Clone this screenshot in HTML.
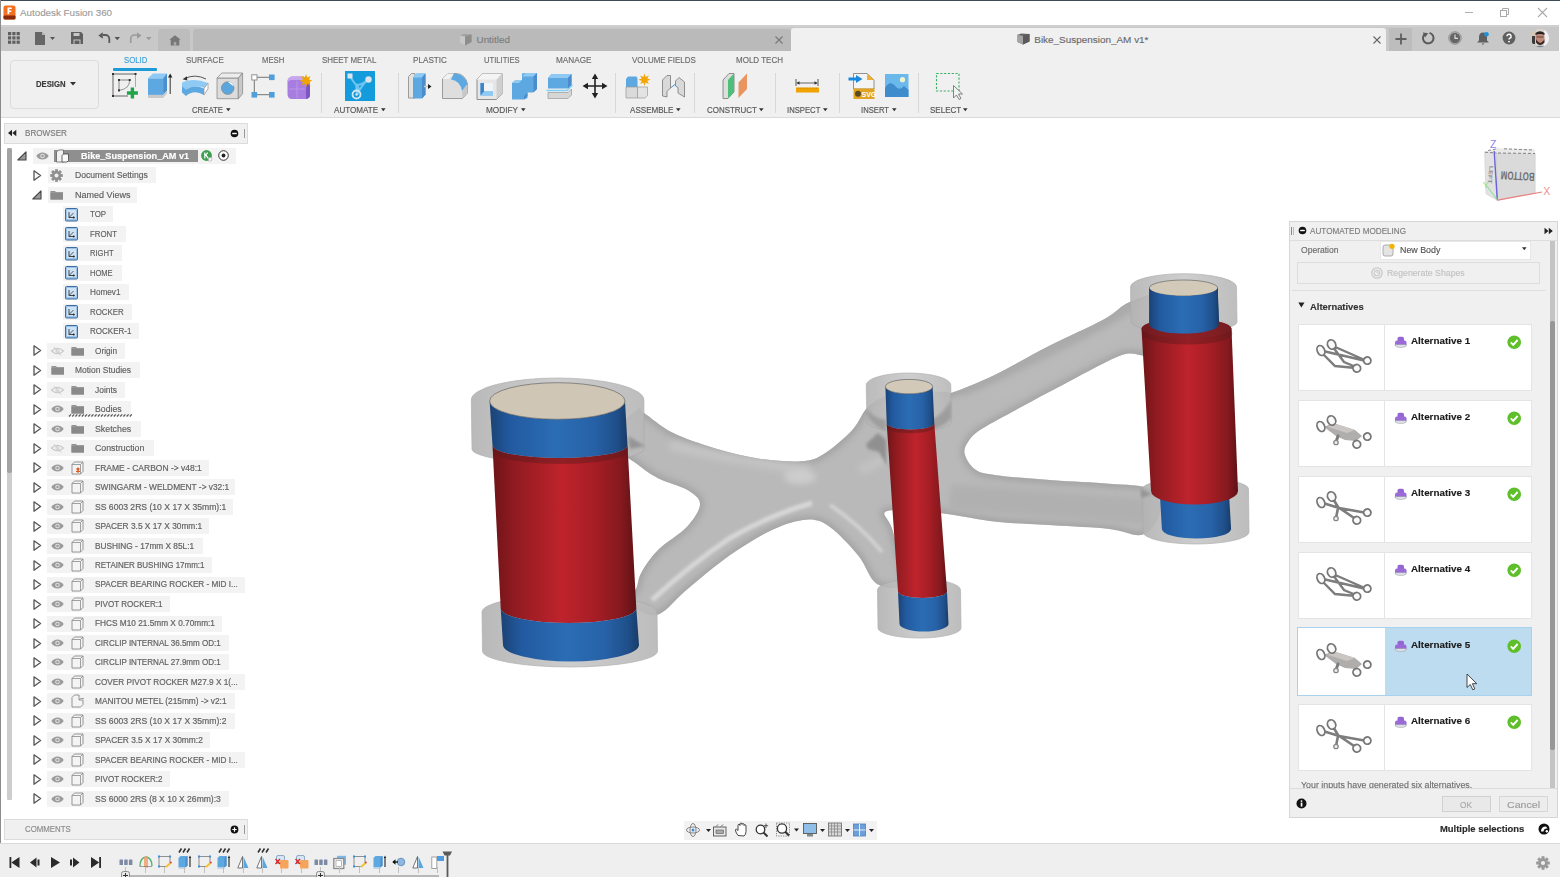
<!DOCTYPE html>
<html><head><meta charset="utf-8">
<style>
*{margin:0;padding:0;box-sizing:border-box}
html,body{width:1560px;height:877px;overflow:hidden;background:#fff;font-family:"Liberation Sans",sans-serif;position:relative}
.a{position:absolute}
.t{position:absolute;white-space:nowrap;line-height:1;-webkit-text-stroke-width:0.15px}
.up{display:inline-block;transform-origin:0 50%}
svg{position:absolute;overflow:visible}
</style></head><body>
<div class="a" style="left:0px;top:0px;width:1560px;height:1px;background:#3e4a54;"></div>
<div class="a" style="left:0px;top:1px;width:1560px;height:24px;background:#ffffff;"></div>
<div class="a" style="left:0px;top:0px;width:1px;height:843px;background:#8c8c8c;"></div>
<svg style="left:3px;top:5px" width="13" height="15" viewBox="0 0 13 15"><rect x="0.5" y="0.5" width="12" height="14" rx="2" fill="#f37021"/><rect x="0.5" y="10.5" width="12" height="4" rx="1" fill="#8a2a0a"/><path d="M4.5 2.5h4.2v1.6H6.3v1.3h2v1.5h-2v2.4H4.5z" fill="#fff"/></svg>
<div class="t" style="left:20.00px;top:8.10px;font-size:9.8px;color:#9c9c9c;font-weight:normal;">Autodesk Fusion 360</div>
<div class="a" style="left:1465px;top:12px;width:8px;height:1px;background:#b0b0b0;"></div>
<svg style="left:1499px;top:7px" width="11" height="11" viewBox="0 0 11 11"><rect x="1.5" y="3.5" width="6" height="6" fill="none" stroke="#aaa" stroke-width="1"/><path d="M3.5 3.5V1.5h6v6h-2" fill="none" stroke="#aaa" stroke-width="1"/></svg>
<svg style="left:1537px;top:7px" width="11" height="11" viewBox="0 0 11 11"><path d="M1 1L10 10M10 1L1 10" stroke="#aaa" stroke-width="1.1"/></svg>
<div class="a" style="left:1px;top:25px;width:1558px;height:26px;background:#c8c8c8;"></div>
<div class="a" style="left:1px;top:25px;width:1558px;height:2px;background:#cfcfcf;"></div>
<svg style="left:8px;top:32px" width="13" height="13" viewBox="0 0 13 13"><rect x="0.0" y="0.0" width="3.2" height="3.2" fill="#5f5f5f"/><rect x="0.0" y="4.3" width="3.2" height="3.2" fill="#5f5f5f"/><rect x="0.0" y="8.6" width="3.2" height="3.2" fill="#5f5f5f"/><rect x="4.3" y="0.0" width="3.2" height="3.2" fill="#5f5f5f"/><rect x="4.3" y="4.3" width="3.2" height="3.2" fill="#5f5f5f"/><rect x="4.3" y="8.6" width="3.2" height="3.2" fill="#5f5f5f"/><rect x="8.6" y="0.0" width="3.2" height="3.2" fill="#5f5f5f"/><rect x="8.6" y="4.3" width="3.2" height="3.2" fill="#5f5f5f"/><rect x="8.6" y="8.6" width="3.2" height="3.2" fill="#5f5f5f"/></svg>
<svg style="left:34px;top:31px" width="24" height="15" viewBox="0 0 24 15"><path d="M1 1h7l3 3v10H1z" fill="#666"/><path d="M8 1v3h3" fill="#bbb"/><path d="M16 6h5l-2.5 3z" fill="#555"/></svg>
<svg style="left:71px;top:32px" width="12" height="12" viewBox="0 0 12 12"><path d="M0 0h10l2 2v10H0z" fill="#5f5f5f"/><rect x="2.5" y="1" width="6" height="3" fill="#c8c8c8"/><rect x="2.5" y="7.5" width="7" height="4.5" fill="#c8c8c8"/><rect x="3.5" y="8.5" width="5" height="3.5" fill="#5f5f5f"/></svg>
<svg style="left:97px;top:32px" width="26" height="13" viewBox="0 0 26 13"><path d="M6 3H8.5A3.8 3.8 0 0 1 12.3 6.8V11" fill="none" stroke="#5a5a5a" stroke-width="1.8"/><path d="M1.3 3.5L5.8 0.2V6.8z" fill="#5a5a5a"/><path d="M17.5 5h5.5l-2.75 3.2z" fill="#555"/></svg>
<svg style="left:129px;top:32px" width="26" height="13" viewBox="0 0 26 13"><path d="M8 3H5.5A3.8 3.8 0 0 0 1.7 6.8V11" fill="none" stroke="#9a9a9a" stroke-width="1.6"/><path d="M12.5 3.5L8 0.2V6.8z" fill="#9a9a9a"/><path d="M17 5h5.5l-2.75 3.2z" fill="#9a9a9a"/></svg>
<div class="a" style="left:158px;top:29px;width:32px;height:22px;background:#bdbdbd;border-radius:3px 3px 0 0;"></div>
<svg style="left:169px;top:35px" width="12" height="11" viewBox="0 0 12 11"><path d="M6 0.3L11.7 4.8H10.3V10.5H1.7V4.8H0.3z" fill="#777"/><rect x="4.8" y="7" width="2.4" height="3.5" fill="#a8a8a8"/></svg>
<div class="a" style="left:193px;top:29px;width:598px;height:22px;background:#bababa;border-radius:3px 3px 0 0;"></div>
<svg style="left:459px;top:33px" width="14" height="13" viewBox="0 0 14 13"><path d="M1 2.5L5 1L12.5 1.5V9L6 12.5L1 10z" fill="#a0a0a0"/><path d="M1 2.5L6 3.5V12.5L1 10z" fill="#c8c8c8"/><path d="M6 3.5L12.5 1.5V9L6 12.5z" fill="#8e8e8e"/></svg>
<div class="t" style="left:476.50px;top:35.22px;font-size:9.9px;color:#7c7c7c;font-weight:normal;">Untitled</div>
<svg style="left:775px;top:36px" width="8" height="8" viewBox="0 0 8 8"><path d="M0.5 0.5L7.5 7.5M7.5 0.5L0.5 7.5" stroke="#777" stroke-width="1.1"/></svg>
<div class="a" style="left:791px;top:28px;width:595px;height:23px;background:#f0f0f0;border-radius:3px 3px 0 0;"></div>
<svg style="left:1017px;top:33px" width="13" height="12" viewBox="0 0 13 12"><path d="M0.5 1.8L4.5 0.5L12.5 1V8.5L6 11.5L0.5 9z" fill="#666"/><path d="M0.5 1.8L6 3V11.5L0.5 9z" fill="#a4a4a4"/><path d="M6 3L12.5 1V8.5L6 11.5z" fill="#5a5a5a"/></svg>
<div class="t" style="left:1034.30px;top:35.19px;font-size:9.93px;color:#6a6a6a;font-weight:normal;">Bike_Suspension_AM v1*</div>
<svg style="left:1373px;top:36px" width="8" height="8" viewBox="0 0 8 8"><path d="M0.5 0.5L7.5 7.5M7.5 0.5L0.5 7.5" stroke="#666" stroke-width="1.1"/></svg>
<div class="a" style="left:1389px;top:28px;width:23px;height:23px;background:#bdbdbd;"></div>
<svg style="left:1395px;top:33px" width="12" height="12" viewBox="0 0 12 12"><path d="M6 0.5V11.5M0.5 6H11.5" stroke="#5f5f5f" stroke-width="1.8"/></svg>
<svg style="left:1421px;top:31px" width="14" height="14" viewBox="0 0 14 14"><path d="M3.2 3.6A5.3 5.3 0 1 0 8.5 1.9" fill="none" stroke="#5a5a5a" stroke-width="2"/><path d="M1.8 1.5L7.2 2.2L4 6.5z" fill="#5a5a5a"/></svg>
<svg style="left:1448px;top:31px" width="14" height="14" viewBox="0 0 14 14"><circle cx="7" cy="7" r="6.2" fill="none" stroke="#777" stroke-width="0.8"/><circle cx="7" cy="7" r="5.2" fill="#666"/><path d="M7 3.5V7.3H10" fill="none" stroke="#ddd" stroke-width="1.2"/></svg>
<svg style="left:1476px;top:31px" width="14" height="15" viewBox="0 0 14 15"><path d="M7 1.5C4.5 1.5 3 3.5 3 6V9.5L1 11.5H13L11 9.5V6C11 3.5 9.5 1.5 7 1.5z" fill="#5f5f5f"/><path d="M5.5 12.5h3L7 14z" fill="#5f5f5f"/><circle cx="10.5" cy="3.3" r="2.3" fill="#1e90e0"/></svg>
<svg style="left:1502px;top:31px" width="14" height="14" viewBox="0 0 14 14"><circle cx="7" cy="7" r="6.4" fill="#5f5f5f"/><path d="M4.9 5.3A2.1 2.1 0 1 1 7.8 7.2C7.2 7.5 7 7.9 7 8.6" fill="none" stroke="#fff" stroke-width="1.5"/><circle cx="7" cy="10.6" r="0.9" fill="#fff"/></svg>
<svg style="left:1530px;top:28px" width="20" height="20" viewBox="0 0 20 20"><defs><clipPath id="av"><circle cx="10" cy="10" r="9.2"/></clipPath><filter id="avb"><feGaussianBlur stdDeviation="0.6"/></filter></defs><g clip-path="url(#av)"><g filter="url(#avb)"><rect width="20" height="20" fill="#d8d4cf"/><rect x="0" y="0" width="6" height="20" fill="#d9c8b2"/><rect x="14" y="0" width="6" height="20" fill="#eeeeee"/><rect x="2" y="8" width="3" height="8" fill="#3a3a3a"/><ellipse cx="10" cy="9.5" rx="4.6" ry="5.2" fill="#c08a7a"/><path d="M5.5 5Q10 1.5 14.5 5V7Q10 5 5.5 7z" fill="#2a2220"/><path d="M6 11Q10 18.5 14.5 11V14.5Q10 19.5 6 14.5z" fill="#3a2622"/><path d="M6.5 9H13.5" stroke="#5a4038" stroke-width="0.9"/><path d="M3 20Q10 15 17 20z" fill="#7d8a96"/></g></g></svg>
<div class="a" style="left:1px;top:51px;width:1559px;height:66px;background:#f0f0f0;"></div>
<div class="a" style="left:1px;top:117px;width:1559px;height:1px;background:#dadada;"></div>
<div class="a" style="left:10px;top:60px;width:89px;height:49px;background:#f0f0f0;border:1px solid #dcdcdc;border-radius:4px;"></div>
<div class="t" style="left:35.50px;top:79.93px;font-size:9.3px;color:#3a3a3a;font-weight:bold;transform:scale(0.83,1.0);transform-origin:0 7.87px;">DESIGN</div>
<svg style="left:70px;top:82px" width="6" height="4" viewBox="0 0 6 4"><path d="M0 0h6L3 3.5z" fill="#333"/></svg>
<div class="t" style="left:123.60px;top:55.78px;font-size:9.0px;color:#3aa0d8;font-weight:normal;transform:scale(0.863,1.000);transform-origin:0 7.62px;">SOLID</div>
<div class="t" style="left:186.30px;top:55.78px;font-size:9.0px;color:#6a6a6a;font-weight:normal;transform:scale(0.887,1.000);transform-origin:0 7.62px;">SURFACE</div>
<div class="t" style="left:262.00px;top:55.78px;font-size:9.0px;color:#6a6a6a;font-weight:normal;transform:scale(0.861,1.000);transform-origin:0 7.62px;">MESH</div>
<div class="t" style="left:321.50px;top:55.78px;font-size:9.0px;color:#6a6a6a;font-weight:normal;transform:scale(0.880,1.000);transform-origin:0 7.62px;">SHEET METAL</div>
<div class="t" style="left:413.00px;top:55.78px;font-size:9.0px;color:#6a6a6a;font-weight:normal;transform:scale(0.906,1.000);transform-origin:0 7.62px;">PLASTIC</div>
<div class="t" style="left:484.40px;top:55.78px;font-size:9.0px;color:#6a6a6a;font-weight:normal;transform:scale(0.847,1.000);transform-origin:0 7.62px;">UTILITIES</div>
<div class="t" style="left:556.00px;top:55.78px;font-size:9.0px;color:#6a6a6a;font-weight:normal;transform:scale(0.910,1.000);transform-origin:0 7.62px;">MANAGE</div>
<div class="t" style="left:632.00px;top:55.78px;font-size:9.0px;color:#6a6a6a;font-weight:normal;transform:scale(0.885,1.000);transform-origin:0 7.62px;">VOLUME FIELDS</div>
<div class="t" style="left:735.50px;top:55.78px;font-size:9.0px;color:#6a6a6a;font-weight:normal;transform:scale(0.890,1.000);transform-origin:0 7.62px;">MOLD TECH</div>
<div class="a" style="left:113px;top:68px;width:44px;height:3px;background:#1e9bd7;border-radius:1px;"></div>
<div class="t" style="left:192.00px;top:105.52px;font-size:8.6px;color:#555;font-weight:normal;transform:scale(0.905,1.000);transform-origin:0 7.28px;">CREATE</div>
<svg style="left:226px;top:108px" width="5" height="4" viewBox="0 0 5 4"><path d="M0 0.3h4.6L2.3 3.3z" fill="#333"/></svg>
<div class="t" style="left:333.50px;top:105.52px;font-size:8.6px;color:#555;font-weight:normal;transform:scale(0.941,1.000);transform-origin:0 7.28px;">AUTOMATE</div>
<svg style="left:381px;top:108px" width="5" height="4" viewBox="0 0 5 4"><path d="M0 0.3h4.6L2.3 3.3z" fill="#333"/></svg>
<div class="t" style="left:486.00px;top:105.52px;font-size:8.6px;color:#555;font-weight:normal;transform:scale(0.957,1.000);transform-origin:0 7.28px;">MODIFY</div>
<svg style="left:521px;top:108px" width="5" height="4" viewBox="0 0 5 4"><path d="M0 0.3h4.6L2.3 3.3z" fill="#333"/></svg>
<div class="t" style="left:629.50px;top:105.52px;font-size:8.6px;color:#555;font-weight:normal;transform:scale(0.938,1.000);transform-origin:0 7.28px;">ASSEMBLE</div>
<svg style="left:676px;top:108px" width="5" height="4" viewBox="0 0 5 4"><path d="M0 0.3h4.6L2.3 3.3z" fill="#333"/></svg>
<div class="t" style="left:707.00px;top:105.52px;font-size:8.6px;color:#555;font-weight:normal;transform:scale(0.926,1.000);transform-origin:0 7.28px;">CONSTRUCT</div>
<svg style="left:759px;top:108px" width="5" height="4" viewBox="0 0 5 4"><path d="M0 0.3h4.6L2.3 3.3z" fill="#333"/></svg>
<div class="t" style="left:786.60px;top:105.52px;font-size:8.6px;color:#555;font-weight:normal;transform:scale(0.896,1.000);transform-origin:0 7.28px;">INSPECT</div>
<svg style="left:823px;top:108px" width="5" height="4" viewBox="0 0 5 4"><path d="M0 0.3h4.6L2.3 3.3z" fill="#333"/></svg>
<div class="t" style="left:861.00px;top:105.52px;font-size:8.6px;color:#555;font-weight:normal;transform:scale(0.892,1.000);transform-origin:0 7.28px;">INSERT</div>
<svg style="left:892px;top:108px" width="5" height="4" viewBox="0 0 5 4"><path d="M0 0.3h4.6L2.3 3.3z" fill="#333"/></svg>
<div class="t" style="left:929.60px;top:105.52px;font-size:8.6px;color:#555;font-weight:normal;transform:scale(0.933,1.000);transform-origin:0 7.28px;">SELECT</div>
<svg style="left:963px;top:108px" width="5" height="4" viewBox="0 0 5 4"><path d="M0 0.3h4.6L2.3 3.3z" fill="#333"/></svg>
<div class="a" style="left:321px;top:73px;width:1px;height:40px;background:#d8d8d8;"></div>
<div class="a" style="left:398px;top:73px;width:1px;height:40px;background:#d8d8d8;"></div>
<div class="a" style="left:615px;top:73px;width:1px;height:40px;background:#d8d8d8;"></div>
<div class="a" style="left:694px;top:73px;width:1px;height:40px;background:#d8d8d8;"></div>
<div class="a" style="left:775px;top:73px;width:1px;height:40px;background:#d8d8d8;"></div>
<div class="a" style="left:839px;top:73px;width:1px;height:40px;background:#d8d8d8;"></div>
<div class="a" style="left:918px;top:73px;width:1px;height:40px;background:#d8d8d8;"></div>
<svg style="left:111px;top:72px" width="29" height="28" viewBox="0 0 29 28">
<path d="M2 2H24.5M2 2V24M2 24H17M24.5 2V15" fill="none" stroke="#555" stroke-width="0.9"/>
<path d="M24.5 2V15M6 24H17" fill="none" stroke="#aaa" stroke-width="1"/>
<path d="M8 8H18.7M8 8V18.4" fill="none" stroke="#777" stroke-width="0.9"/>
<path d="M18.7 8Q18.7 17 8 18.4" fill="none" stroke="#888" stroke-width="0.9"/>
<rect x="1" y="1" width="2" height="2" fill="#333"/><rect x="23.5" y="1" width="2" height="2" fill="#333"/><rect x="1" y="23" width="2" height="2" fill="#333"/>
<rect x="7" y="7" width="2" height="2" fill="#333"/><rect x="17.7" y="7" width="2" height="2" fill="#333"/><rect x="7" y="17.4" width="2" height="2" fill="#333"/>
<path d="M21.4 15.5V26.5M15.9 21H26.9" stroke="#21a34a" stroke-width="3.4"/>
</svg>
<svg style="left:147px;top:72px" width="26" height="28" viewBox="0 0 26 28">
<path d="M1 6.3H16.1V22.9H1z" fill="#5ea8e2"/>
<path d="M1 6.3L5.9 1.4H20L16.1 6.3z" fill="#8ecaf3"/>
<path d="M16.1 6.3L20 1.4V18.5L16.1 22.9z" fill="#4a90d0"/>
<path d="M1 22.9H16.1L20 18.5V21.5L16.1 26.1H1z" fill="#c9c9c9"/>
<path d="M23.2 4V22" stroke="#333" stroke-width="1"/><path d="M21 5.5L23.2 1.5L25.4 5.5z" fill="#222"/>
</svg>
<svg style="left:181px;top:72px" width="29" height="28" viewBox="0 0 29 28">
<path d="M4 6.5Q14 1.5 25 7" fill="none" stroke="#555" stroke-width="1"/>
<path d="M1.5 7.2L6 4.2L6.2 8.6z" fill="#333"/>
<path d="M1 10.5Q13 5.5 27 11V17Q13 12 5 17.5L1 14z" fill="#8ecaf3"/>
<path d="M1 14L5 17.5Q13 12 23 16.5V23Q13 17 5 24L1 20.5z" fill="#5ea8e2"/>
<path d="M23 16.5L27 11V17L23 23z" fill="#fff" stroke="#999" stroke-width="0.8"/>
</svg>
<svg style="left:216px;top:72px" width="28" height="28" viewBox="0 0 28 28">
<path d="M1 6H22.3V26.7H1z" fill="#dcdcdc" stroke="#8a8a8a" stroke-width="0.8"/>
<path d="M1 6L5.8 1H26.6L22.3 6z" fill="#ececec" stroke="#8a8a8a" stroke-width="0.8"/>
<path d="M22.3 6L26.6 1V21.7L22.3 26.7z" fill="#c9c9c9" stroke="#8a8a8a" stroke-width="0.8"/>
<circle cx="11.7" cy="16.1" r="6.3" fill="#5aa6df" stroke="#8a8a8a" stroke-width="0.8"/>
<path d="M11.7 9.8A6.3 6.3 0 0 1 17.8 14.6Q14 11.5 11.7 9.8z" fill="#fff"/>
</svg>
<svg style="left:251px;top:74px" width="25" height="25" viewBox="0 0 25 25">
<path d="M6 3.3H18M3.3 6V19M6 20.7H18" stroke="#666" stroke-width="0.9"/>
<rect x="0.8" y="0.8" width="5.2" height="5.2" fill="#fff" stroke="#888" stroke-width="0.9"/>
<rect x="18" y="0.5" width="5.6" height="5.6" fill="#4e9fdc"/>
<rect x="0.5" y="18" width="5.6" height="5.6" fill="#4e9fdc"/>
<rect x="18" y="18" width="5.6" height="5.6" fill="#4e9fdc"/>
</svg>
<svg style="left:286px;top:73px" width="27" height="27" viewBox="0 0 27 27">
<path d="M1.5 9Q1.5 4 6 3.5H16Q20 3.5 21 6L24 10V22Q24 25.5 20 26H6Q1.5 26 1.5 21z" fill="#a77de0"/>
<path d="M1.5 9Q1.5 4 6 3.5H16Q19 3.5 20 5.5L18 7H5Q3 7.5 1.5 9z" fill="#c7a6f0"/>
<path d="M20 8.5L24 10V22Q24 25.5 20 26z" fill="#7e56c4"/>
<path d="M3 16H19M11 8V25" stroke="#c9a9f2" stroke-width="0.8" opacity="0.7"/>
<path d="M20 1L21.2 4.6L24.5 3L23 6.5L26.6 7.7L23 9L24.5 12.4L21.2 10.8L20 14.4L18.8 10.8L15.5 12.4L17 9L13.4 7.7L17 6.5L15.5 3L18.8 4.6z" fill="#f0a400"/>
</svg>
<div class="a" style="left:345px;top:71px;width:30px;height:30px;background:#149bdb;"></div>
<svg style="left:345px;top:71px" width="30" height="30" viewBox="0 0 30 30">
<path d="M5 5Q9 12 11 13.5Q16 15 23 8.5M11 13.5Q12 19 12 24M11 13.5Q16 17 12 24M23 8.5Q16 15 12 24" fill="none" stroke="#6fc4f1" stroke-width="2"/>
<rect x="2.5" y="2.5" width="5" height="5" fill="#d9e6ee"/>
<circle cx="23.5" cy="8.5" r="3.2" fill="#dde3e8"/>
<circle cx="11.5" cy="23.5" r="4" fill="none" stroke="#d5e6f0" stroke-width="1.8"/>
<circle cx="11.5" cy="23.5" r="1.2" fill="#d5e6f0"/>
</svg>
<svg style="left:407px;top:72px" width="26" height="28" viewBox="0 0 26 28">
<path d="M1.5 4.5L4.5 1.5H8V26H1.5z" fill="#e2e2e2" stroke="#888" stroke-width="0.8"/>
<path d="M6 5.5L9.5 1.5H18.5V22.5L15 26.5H6z" fill="#5ea8e2"/>
<path d="M6 5.5L9.5 1.5H18.5L15 5.5z" fill="#8ecaf3"/>
<path d="M15 5.5L18.5 1.5V22.5L15 26.5z" fill="#4a8ccc"/>
<path d="M17 14.5H21.5" stroke="#ccc" stroke-width="1.5"/><path d="M21 12L24.5 14.5L21 17z" fill="#222"/>
</svg>
<svg style="left:441px;top:72px" width="28" height="28" viewBox="0 0 28 28">
<path d="M1.5 7L7 1.5H15Q24 2 26.5 12V21L21.5 26.5H1.5z" fill="#dedede" stroke="#888" stroke-width="0.8"/>
<path d="M1.5 7L7 1.5H13L7.5 7z" fill="#f2f2f2"/>
<path d="M13 1.5Q24 2 26.5 12L21 19Q19.5 9 10 7.5z" fill="#5ea8e2"/>
<path d="M21 19L26.5 12V21L21.5 26.5z" fill="#c8c8c8"/>
</svg>
<svg style="left:476px;top:72px" width="28" height="28" viewBox="0 0 28 28">
<path d="M1 7.5L6.5 1.5H26V22L20.5 27.5H1z" fill="#e6e6e6" stroke="#777" stroke-width="0.8"/>
<path d="M20.5 7.5L26 1.5V22L20.5 27.5z" fill="#cfcfcf"/>
<path d="M1 7.5L6.5 1.5H26L20.5 7.5z" fill="#f4f4f4"/>
<rect x="4.5" y="11" width="12.5" height="12.5" fill="#eef4f8"/>
<path d="M4.5 11H8V19.5H17V23.5H4.5z" fill="#5ea8e2"/>
<path d="M4.5 11H8V19.5L4.5 23.5z" fill="#3d86c6"/>
<path d="M8 19.5H17V23.5H4.5z" fill="#8ecaf3"/>
</svg>
<svg style="left:511px;top:72px" width="28" height="28" viewBox="0 0 28 28">
<path d="M1 11L4.5 8H11V1.5L14.5 1H26V17L22 20.5H16.5V26L13 27.5H1z" fill="#5ea8e2"/>
<path d="M11 4.5L14.5 1H26L22.5 4.5z" fill="#8ecaf3"/>
<path d="M22.5 4.5L26 1V17L22.5 20.5z" fill="#4a8ccc"/>
<path d="M1 11L4.5 8H11L8 11z" fill="#8ecaf3"/>
<path d="M13 24L16.5 20.5V24L13 27.5z" fill="#4a8ccc"/>
</svg>
<svg style="left:546px;top:72px" width="28" height="28" viewBox="0 0 28 28">
<path d="M2 6L5.5 2H25.5V13L22 16.5H2z" fill="#5ea8e2"/>
<path d="M2 6L5.5 2H25.5L22 6z" fill="#8ecaf3"/>
<path d="M22 6L25.5 2V13L22 16.5z" fill="#4a8ccc"/>
<path d="M0.5 18.5H21L26.5 13" fill="none" stroke="#7fd0f5" stroke-width="1.4"/>
<path d="M2 20.5H22L25.5 17V23L22 26.5H2z" fill="#d6d6d6" stroke="#999" stroke-width="0.7"/>
</svg>
<svg style="left:582px;top:73px" width="26" height="26" viewBox="0 0 26 26">
<path d="M13 2V24M2 13H24" stroke="#222" stroke-width="1.6"/>
<path d="M13 0.5L16.2 6H9.8z M13 25.5L16.2 20H9.8z M0.5 13L6 9.8V16.2z M25.5 13L20 9.8V16.2z" fill="#222"/>
</svg>
<svg style="left:625px;top:73px" width="27" height="27" viewBox="0 0 27 27">
<path d="M1 6L3 3.5H11.5L12.5 5.5V14H1z" fill="#5ea8e2"/>
<path d="M1 14H12.5V25H1z" fill="#dadada" stroke="#9a9a9a" stroke-width="0.7"/>
<path d="M12.5 14H22.5V22.5L20 25H12.5z" fill="#e3e3e3" stroke="#9a9a9a" stroke-width="0.7"/>
<path d="M19.5 0.5L20.6 3.9L23.8 2.4L22.3 5.6L25.7 6.7L22.3 7.8L23.8 11L20.6 9.5L19.5 12.9L18.4 9.5L15.2 11L16.7 7.8L13.3 6.7L16.7 5.6L15.2 2.4L18.4 3.9z" fill="#f2a500"/>
</svg>
<svg style="left:661px;top:74px" width="26" height="25" viewBox="0 0 26 25">
<path d="M1.5 6L6 1.5H9.5V14L6 17.5V23L1.5 22z" fill="#d9d9d9" stroke="#777" stroke-width="0.8"/>
<path d="M14.5 7L18 3.5L23.5 8V23L17 19V13.5L14.5 12z" fill="#d9d9d9" stroke="#777" stroke-width="0.8"/>
<path d="M9.5 14L14.5 10" stroke="#3e95d8" stroke-width="1"/>
</svg>
<svg style="left:722px;top:72px" width="27" height="28" viewBox="0 0 27 28">
<path d="M1 8L7 1.5H12V20L6 26.5H1z" fill="#dedede" stroke="#777" stroke-width="0.8"/>
<path d="M6 8L12 1.5V20L6 26.5z" fill="#4dbf78"/>
<path d="M16.5 10.5L25 1.5V17L16.5 26z" fill="#e89560"/>
</svg>
<svg style="left:795px;top:78px" width="25" height="16" viewBox="0 0 25 16">
<path d="M1 1V8M23 1V8" stroke="#444" stroke-width="0.9"/>
<path d="M2 5H22" stroke="#555" stroke-width="0.9"/>
<path d="M1.5 5L4.5 3.3V6.7z M22.5 5L19.5 3.3V6.7z" fill="#333"/>
<rect x="1" y="9.5" width="23" height="5" fill="#f0a200"/>
<path d="M3 9.5V11M6 9.5V11M9 9.5V11M12 9.5V11M15 9.5V11M18 9.5V11M21 9.5V11" stroke="#b87800" stroke-width="0.6"/>
</svg>
<svg style="left:848px;top:72px" width="28" height="28" viewBox="0 0 28 28">
<path d="M5.5 1.5H19L26 8V17H5.5z" fill="#f4f4f4" stroke="#777" stroke-width="0.8"/>
<path d="M19 1.5L26 8H19z" fill="#f0b030"/>
<rect x="5.5" y="16.5" width="21" height="10.5" fill="#e2a420"/>
<circle cx="10" cy="21.7" r="3" fill="#5a4a20"/>
<text x="13.5" y="25.3" font-family="Liberation Sans" font-weight="bold" font-size="7" fill="#fff">SVG</text>
<path d="M0.5 7H8.5" stroke="#1888e0" stroke-width="3"/><path d="M8 3L14.5 7L8 11z" fill="#1888e0"/>
</svg>
<svg style="left:884px;top:73px" width="26" height="25" viewBox="0 0 26 25">
<rect x="1" y="1" width="23.5" height="23" fill="#6ab8ec"/>
<path d="M1 24V15Q6 6 12 14Q16 18 20 13L24.5 17V24z" fill="#3f8ccc"/>
<circle cx="18.5" cy="6.7" r="2.6" fill="#f0f3d0"/>
</svg>
<svg style="left:935px;top:72px" width="29" height="28" viewBox="0 0 29 28">
<rect x="1.5" y="1.5" width="22.5" height="17.5" fill="none" stroke="#3bb066" stroke-width="1.1" stroke-dasharray="2.2 1.6"/>
<path d="M18.5 13.5V26L21.5 23L24 27.5L26 26.5L23.5 22H27.5z" fill="#f2f2f2" stroke="#777" stroke-width="0.9"/>
</svg>
<div class="a" style="left:4px;top:123px;width:244px;height:21px;background:#f0f0f0;border:1px solid #dcdcdc;"></div>
<svg style="left:8px;top:129px" width="9" height="8" viewBox="0 0 9 8"><path d="M0 4L4 0.8V7.2z M4.3 4L8.3 0.8V7.2z" fill="#222"/></svg>
<div class="t" style="left:24.50px;top:128.88px;font-size:9.0px;color:#7a7a7a;font-weight:normal;transform:scale(0.901,1.000);transform-origin:0 7.62px;">BROWSER</div>
<svg style="left:230px;top:129px" width="9" height="9" viewBox="0 0 9 9"><circle cx="4.5" cy="4.5" r="3.8" fill="#111"/><rect x="2.2" y="3.8" width="4.6" height="1.4" fill="#fff"/></svg>
<div class="a" style="left:244px;top:129px;width:1px;height:9px;background:#999;"></div>
<div class="a" style="left:7px;top:148px;width:5px;height:652px;background:#cdcdcd;border-radius:1px;"></div>
<div class="a" style="left:7px;top:148px;width:5px;height:325px;background:#a3a3a3;border-radius:2px;"></div>
<div class="a" style="left:33px;top:148px;width:203px;height:16px;background:#f3f3f3;"></div>
<svg style="left:17px;top:151px" width="10" height="10" viewBox="0 0 10 10"><path d="M9 0.8V9H0.8z" fill="#9a9a9a" stroke="#444" stroke-width="1.1" stroke-linejoin="round"/></svg>
<svg style="left:36px;top:152px" width="13" height="9" viewBox="0 0 13 9"><path d="M0.3 4C3 -0.7 10 -0.7 12.7 4C10 8.7 3 8.7 0.3 4z" fill="#9b9b9b"/><circle cx="6.5" cy="4" r="2.3" fill="#dedede"/><circle cx="6.5" cy="4" r="1.2" fill="#9b9b9b"/></svg>
<div class="a" style="left:54px;top:150px;width:144px;height:12px;background:#8f8f8f;"></div>
<svg style="left:55px;top:149px" width="15" height="14" viewBox="0 0 15 14"><path d="M1.5 3L3.5 1H8.5V13H1.5z" fill="#f2f2f2" stroke="#555" stroke-width="0.7"/><path d="M7 6.5L8.5 5H13.5V11.5L12 13H7z" fill="#fafafa" stroke="#444" stroke-width="0.8"/></svg>
<div class="t" style="left:80.80px;top:151.51px;font-size:9.2px;color:#ffffff;font-weight:bold;transform:scale(0.994,1.000);transform-origin:0 7.79px;">Bike_Suspension_AM v1</div>
<svg style="left:201px;top:150px" width="12" height="12" viewBox="0 0 12 12"><circle cx="5.5" cy="5.5" r="5.4" fill="#3f9e4f"/><path d="M3.8 2.6V8.4M3.8 5.8L6.8 2.6M4.8 4.8L7.2 8.4" stroke="#fff" stroke-width="1.2"/><rect x="7.3" y="7.5" width="3.5" height="3.5" rx="1" fill="#f4f4f4" stroke="#888" stroke-width="0.4"/></svg>
<svg style="left:218px;top:150px" width="12" height="12" viewBox="0 0 12 12"><circle cx="5.5" cy="5.5" r="4.8" fill="#fff" stroke="#333" stroke-width="1"/><circle cx="5.5" cy="5.5" r="1.9" fill="#222"/></svg>
<div class="a" style="left:48px;top:167px;width:108px;height:16px;background:#f3f3f3;"></div>
<svg style="left:33px;top:170px" width="9" height="11" viewBox="0 0 9 11"><path d="M1 0.8L7.6 5.5L1 10.2z" fill="#fafafa" stroke="#555" stroke-width="1.3" stroke-linejoin="round"/></svg>
<svg style="left:50px;top:169px" width="13" height="13" viewBox="0 0 13 13"><g transform="translate(6.5,6.5)"><rect x="-1.4" y="-6.3" width="2.8" height="3" fill="#8f8f8f" transform="rotate(0)"/><rect x="-1.4" y="-6.3" width="2.8" height="3" fill="#8f8f8f" transform="rotate(45)"/><rect x="-1.4" y="-6.3" width="2.8" height="3" fill="#8f8f8f" transform="rotate(90)"/><rect x="-1.4" y="-6.3" width="2.8" height="3" fill="#8f8f8f" transform="rotate(135)"/><rect x="-1.4" y="-6.3" width="2.8" height="3" fill="#8f8f8f" transform="rotate(180)"/><rect x="-1.4" y="-6.3" width="2.8" height="3" fill="#8f8f8f" transform="rotate(225)"/><rect x="-1.4" y="-6.3" width="2.8" height="3" fill="#8f8f8f" transform="rotate(270)"/><rect x="-1.4" y="-6.3" width="2.8" height="3" fill="#8f8f8f" transform="rotate(315)"/><circle r="4.5" fill="#8f8f8f"/><circle r="2" fill="#f0f0f0"/></g></svg>
<div class="t" style="left:74.60px;top:171.38px;font-size:8.5px;color:#5e5e5e;font-weight:normal;transform:scale(1.014,1.000);transform-origin:0 7.20px;">Document Settings</div>
<div class="a" style="left:48px;top:187px;width:89px;height:16px;background:#f3f3f3;"></div>
<svg style="left:32px;top:190px" width="10" height="10" viewBox="0 0 10 10"><path d="M9 0.8V9H0.8z" fill="#9a9a9a" stroke="#444" stroke-width="1.1" stroke-linejoin="round"/></svg>
<svg style="left:50px;top:190px" width="14" height="11" viewBox="0 0 14 11"><path d="M0.5 1H5L6 2.2H13V9.5H0.5z" fill="#8e8e8e"/><rect x="0.5" y="2.6" width="12.5" height="6.9" fill="#8a8a8a"/><path d="M0.5 2.2H5.5" stroke="#b0b0b0" stroke-width="0.6"/></svg>
<div class="t" style="left:74.60px;top:190.86px;font-size:8.5px;color:#5e5e5e;font-weight:normal;transform:scale(1.060,1.000);transform-origin:0 7.20px;">Named Views</div>
<div class="a" style="left:63px;top:206px;width:50px;height:16px;background:#f3f3f3;"></div>
<svg style="left:65px;top:208px" width="14" height="14" viewBox="0 0 14 14"><rect x="0.5" y="0.5" width="12" height="12.5" rx="1" fill="#9cc4e8" stroke="#2f5f95" stroke-width="0.9"/><rect x="2" y="2" width="9" height="9" fill="#cfe3f5"/><path d="M4 4V9.5H9.5" fill="none" stroke="#333" stroke-width="0.9"/><path d="M4 9.5L8.5 5" stroke="#333" stroke-width="0.8"/><circle cx="8.7" cy="9.5" r="0.9" fill="#222"/></svg>
<div class="t" style="left:89.70px;top:210.34px;font-size:8.5px;color:#5e5e5e;font-weight:normal;transform:scale(0.930,1.000);transform-origin:0 7.20px;">TOP</div>
<div class="a" style="left:63px;top:226px;width:63px;height:16px;background:#f3f3f3;"></div>
<svg style="left:65px;top:227px" width="14" height="14" viewBox="0 0 14 14"><rect x="0.5" y="0.5" width="12" height="12.5" rx="1" fill="#9cc4e8" stroke="#2f5f95" stroke-width="0.9"/><rect x="2" y="2" width="9" height="9" fill="#cfe3f5"/><path d="M4 4V9.5H9.5" fill="none" stroke="#333" stroke-width="0.9"/><path d="M4 9.5L8.5 5" stroke="#333" stroke-width="0.8"/><circle cx="8.7" cy="9.5" r="0.9" fill="#222"/></svg>
<div class="t" style="left:89.70px;top:229.82px;font-size:8.5px;color:#5e5e5e;font-weight:normal;transform:scale(0.922,1.000);transform-origin:0 7.20px;">FRONT</div>
<div class="a" style="left:63px;top:245px;width:59px;height:16px;background:#f3f3f3;"></div>
<svg style="left:65px;top:247px" width="14" height="14" viewBox="0 0 14 14"><rect x="0.5" y="0.5" width="12" height="12.5" rx="1" fill="#9cc4e8" stroke="#2f5f95" stroke-width="0.9"/><rect x="2" y="2" width="9" height="9" fill="#cfe3f5"/><path d="M4 4V9.5H9.5" fill="none" stroke="#333" stroke-width="0.9"/><path d="M4 9.5L8.5 5" stroke="#333" stroke-width="0.8"/><circle cx="8.7" cy="9.5" r="0.9" fill="#222"/></svg>
<div class="t" style="left:89.70px;top:249.30px;font-size:8.5px;color:#5e5e5e;font-weight:normal;transform:scale(0.896,1.000);transform-origin:0 7.20px;">RIGHT</div>
<div class="a" style="left:63px;top:265px;width:59px;height:16px;background:#f3f3f3;"></div>
<svg style="left:65px;top:266px" width="14" height="14" viewBox="0 0 14 14"><rect x="0.5" y="0.5" width="12" height="12.5" rx="1" fill="#9cc4e8" stroke="#2f5f95" stroke-width="0.9"/><rect x="2" y="2" width="9" height="9" fill="#cfe3f5"/><path d="M4 4V9.5H9.5" fill="none" stroke="#333" stroke-width="0.9"/><path d="M4 9.5L8.5 5" stroke="#333" stroke-width="0.8"/><circle cx="8.7" cy="9.5" r="0.9" fill="#222"/></svg>
<div class="t" style="left:89.70px;top:268.78px;font-size:8.5px;color:#5e5e5e;font-weight:normal;transform:scale(0.886,1.000);transform-origin:0 7.20px;">HOME</div>
<div class="a" style="left:63px;top:284px;width:66px;height:16px;background:#f3f3f3;"></div>
<svg style="left:65px;top:286px" width="14" height="14" viewBox="0 0 14 14"><rect x="0.5" y="0.5" width="12" height="12.5" rx="1" fill="#9cc4e8" stroke="#2f5f95" stroke-width="0.9"/><rect x="2" y="2" width="9" height="9" fill="#cfe3f5"/><path d="M4 4V9.5H9.5" fill="none" stroke="#333" stroke-width="0.9"/><path d="M4 9.5L8.5 5" stroke="#333" stroke-width="0.8"/><circle cx="8.7" cy="9.5" r="0.9" fill="#222"/></svg>
<div class="t" style="left:89.70px;top:288.26px;font-size:8.5px;color:#5e5e5e;font-weight:normal;transform:scale(0.964,1.000);transform-origin:0 7.20px;">Homev1</div>
<div class="a" style="left:63px;top:304px;width:69px;height:16px;background:#f3f3f3;"></div>
<svg style="left:65px;top:305px" width="14" height="14" viewBox="0 0 14 14"><rect x="0.5" y="0.5" width="12" height="12.5" rx="1" fill="#9cc4e8" stroke="#2f5f95" stroke-width="0.9"/><rect x="2" y="2" width="9" height="9" fill="#cfe3f5"/><path d="M4 4V9.5H9.5" fill="none" stroke="#333" stroke-width="0.9"/><path d="M4 9.5L8.5 5" stroke="#333" stroke-width="0.8"/><circle cx="8.7" cy="9.5" r="0.9" fill="#222"/></svg>
<div class="t" style="left:89.70px;top:307.74px;font-size:8.5px;color:#5e5e5e;font-weight:normal;transform:scale(0.927,1.000);transform-origin:0 7.20px;">ROCKER</div>
<div class="a" style="left:63px;top:323px;width:76px;height:16px;background:#f3f3f3;"></div>
<svg style="left:65px;top:325px" width="14" height="14" viewBox="0 0 14 14"><rect x="0.5" y="0.5" width="12" height="12.5" rx="1" fill="#9cc4e8" stroke="#2f5f95" stroke-width="0.9"/><rect x="2" y="2" width="9" height="9" fill="#cfe3f5"/><path d="M4 4V9.5H9.5" fill="none" stroke="#333" stroke-width="0.9"/><path d="M4 9.5L8.5 5" stroke="#333" stroke-width="0.8"/><circle cx="8.7" cy="9.5" r="0.9" fill="#222"/></svg>
<div class="t" style="left:89.70px;top:327.22px;font-size:8.5px;color:#5e5e5e;font-weight:normal;transform:scale(0.945,1.000);transform-origin:0 7.20px;">ROCKER-1</div>
<div class="a" style="left:47px;top:343px;width:78px;height:16px;background:#f3f3f3;"></div>
<svg style="left:33px;top:345px" width="9" height="11" viewBox="0 0 9 11"><path d="M1 0.8L7.6 5.5L1 10.2z" fill="#fafafa" stroke="#555" stroke-width="1.3" stroke-linejoin="round"/></svg>
<svg style="left:50.5px;top:347px" width="13" height="9" viewBox="0 0 13 9"><path d="M0.5 4Q6.5 -1.5 12.5 4Q6.5 9.5 0.5 4z" fill="none" stroke="#c8c8c8" stroke-width="1.1"/><circle cx="6.5" cy="4" r="1.6" fill="none" stroke="#c8c8c8" stroke-width="0.9"/><path d="M3 0L10 8.5" stroke="#c8c8c8" stroke-width="0.9"/></svg>
<svg style="left:71px;top:346px" width="14" height="11" viewBox="0 0 14 11"><path d="M0.5 1H5L6 2.2H13V9.5H0.5z" fill="#8e8e8e"/><rect x="0.5" y="2.6" width="12.5" height="6.9" fill="#8a8a8a"/><path d="M0.5 2.2H5.5" stroke="#b0b0b0" stroke-width="0.6"/></svg>
<div class="t" style="left:95.20px;top:346.70px;font-size:8.5px;color:#5e5e5e;font-weight:normal;transform:scale(0.970,1.000);transform-origin:0 7.20px;">Origin</div>
<div class="a" style="left:47px;top:362px;width:93px;height:16px;background:#f3f3f3;"></div>
<svg style="left:33px;top:365px" width="9" height="11" viewBox="0 0 9 11"><path d="M1 0.8L7.6 5.5L1 10.2z" fill="#fafafa" stroke="#555" stroke-width="1.3" stroke-linejoin="round"/></svg>
<svg style="left:50.5px;top:365px" width="14" height="11" viewBox="0 0 14 11"><path d="M0.5 1H5L6 2.2H13V9.5H0.5z" fill="#8e8e8e"/><rect x="0.5" y="2.6" width="12.5" height="6.9" fill="#8a8a8a"/><path d="M0.5 2.2H5.5" stroke="#b0b0b0" stroke-width="0.6"/></svg>
<div class="t" style="left:75.00px;top:366.18px;font-size:8.5px;color:#5e5e5e;font-weight:normal;transform:scale(0.996,1.000);transform-origin:0 7.20px;">Motion Studies</div>
<div class="a" style="left:47px;top:382px;width:78px;height:16px;background:#f3f3f3;"></div>
<svg style="left:33px;top:384px" width="9" height="11" viewBox="0 0 9 11"><path d="M1 0.8L7.6 5.5L1 10.2z" fill="#fafafa" stroke="#555" stroke-width="1.3" stroke-linejoin="round"/></svg>
<svg style="left:50.5px;top:386px" width="13" height="9" viewBox="0 0 13 9"><path d="M0.5 4Q6.5 -1.5 12.5 4Q6.5 9.5 0.5 4z" fill="none" stroke="#c8c8c8" stroke-width="1.1"/><circle cx="6.5" cy="4" r="1.6" fill="none" stroke="#c8c8c8" stroke-width="0.9"/><path d="M3 0L10 8.5" stroke="#c8c8c8" stroke-width="0.9"/></svg>
<svg style="left:71px;top:385px" width="14" height="11" viewBox="0 0 14 11"><path d="M0.5 1H5L6 2.2H13V9.5H0.5z" fill="#8e8e8e"/><rect x="0.5" y="2.6" width="12.5" height="6.9" fill="#8a8a8a"/><path d="M0.5 2.2H5.5" stroke="#b0b0b0" stroke-width="0.6"/></svg>
<div class="t" style="left:95.20px;top:385.66px;font-size:8.5px;color:#5e5e5e;font-weight:normal;transform:scale(0.991,1.000);transform-origin:0 7.20px;">Joints</div>
<div class="a" style="left:47px;top:401px;width:84px;height:16px;background:#f3f3f3;"></div>
<svg style="left:33px;top:404px" width="9" height="11" viewBox="0 0 9 11"><path d="M1 0.8L7.6 5.5L1 10.2z" fill="#fafafa" stroke="#555" stroke-width="1.3" stroke-linejoin="round"/></svg>
<svg style="left:50.5px;top:405px" width="13" height="9" viewBox="0 0 13 9"><path d="M0.3 4C3 -0.7 10 -0.7 12.7 4C10 8.7 3 8.7 0.3 4z" fill="#9b9b9b"/><circle cx="6.5" cy="4" r="2.3" fill="#dedede"/><circle cx="6.5" cy="4" r="1.2" fill="#9b9b9b"/></svg>
<svg style="left:71px;top:404px" width="62" height="13" viewBox="0 0 62 13"><path d="M0.5 1H5L6 2.2H13V9.5H0.5z" fill="#8e8e8e"/><rect x="0.5" y="2.6" width="12.5" height="6.9" fill="#8a8a8a"/><path d="M0.5 2.2H5.5" stroke="#b0b0b0" stroke-width="0.6"/><path d="M-2.0 12.5l2 -2.2M1.2 12.5l2 -2.2M4.4 12.5l2 -2.2M7.6 12.5l2 -2.2M10.8 12.5l2 -2.2M14.0 12.5l2 -2.2M17.2 12.5l2 -2.2M20.4 12.5l2 -2.2M23.6 12.5l2 -2.2M26.8 12.5l2 -2.2M30.0 12.5l2 -2.2M33.2 12.5l2 -2.2M36.4 12.5l2 -2.2M39.6 12.5l2 -2.2M42.8 12.5l2 -2.2M46.0 12.5l2 -2.2M49.2 12.5l2 -2.2M52.4 12.5l2 -2.2M55.6 12.5l2 -2.2M58.8 12.5l2 -2.2" fill="none" stroke="#5a5a5a" stroke-width="1.2"/></svg>
<div class="t" style="left:95.20px;top:405.14px;font-size:8.5px;color:#5e5e5e;font-weight:normal;transform:scale(1.024,1.000);transform-origin:0 7.20px;">Bodies</div>
<div class="a" style="left:47px;top:421px;width:94px;height:16px;background:#f3f3f3;"></div>
<svg style="left:33px;top:423px" width="9" height="11" viewBox="0 0 9 11"><path d="M1 0.8L7.6 5.5L1 10.2z" fill="#fafafa" stroke="#555" stroke-width="1.3" stroke-linejoin="round"/></svg>
<svg style="left:50.5px;top:425px" width="13" height="9" viewBox="0 0 13 9"><path d="M0.3 4C3 -0.7 10 -0.7 12.7 4C10 8.7 3 8.7 0.3 4z" fill="#9b9b9b"/><circle cx="6.5" cy="4" r="2.3" fill="#dedede"/><circle cx="6.5" cy="4" r="1.2" fill="#9b9b9b"/></svg>
<svg style="left:71px;top:424px" width="14" height="11" viewBox="0 0 14 11"><path d="M0.5 1H5L6 2.2H13V9.5H0.5z" fill="#8e8e8e"/><rect x="0.5" y="2.6" width="12.5" height="6.9" fill="#8a8a8a"/><path d="M0.5 2.2H5.5" stroke="#b0b0b0" stroke-width="0.6"/></svg>
<div class="t" style="left:95.20px;top:424.62px;font-size:8.5px;color:#5e5e5e;font-weight:normal;transform:scale(1.035,1.000);transform-origin:0 7.20px;">Sketches</div>
<div class="a" style="left:47px;top:440px;width:107px;height:16px;background:#f3f3f3;"></div>
<svg style="left:33px;top:443px" width="9" height="11" viewBox="0 0 9 11"><path d="M1 0.8L7.6 5.5L1 10.2z" fill="#fafafa" stroke="#555" stroke-width="1.3" stroke-linejoin="round"/></svg>
<svg style="left:50.5px;top:444px" width="13" height="9" viewBox="0 0 13 9"><path d="M0.5 4Q6.5 -1.5 12.5 4Q6.5 9.5 0.5 4z" fill="none" stroke="#c8c8c8" stroke-width="1.1"/><circle cx="6.5" cy="4" r="1.6" fill="none" stroke="#c8c8c8" stroke-width="0.9"/><path d="M3 0L10 8.5" stroke="#c8c8c8" stroke-width="0.9"/></svg>
<svg style="left:71px;top:443px" width="14" height="11" viewBox="0 0 14 11"><path d="M0.5 1H5L6 2.2H13V9.5H0.5z" fill="#8e8e8e"/><rect x="0.5" y="2.6" width="12.5" height="6.9" fill="#8a8a8a"/><path d="M0.5 2.2H5.5" stroke="#b0b0b0" stroke-width="0.6"/></svg>
<div class="t" style="left:95.20px;top:444.10px;font-size:8.5px;color:#5e5e5e;font-weight:normal;transform:scale(1.033,1.000);transform-origin:0 7.20px;">Construction</div>
<div class="a" style="left:47px;top:460px;width:162px;height:16px;background:#f3f3f3;"></div>
<svg style="left:33px;top:462px" width="9" height="11" viewBox="0 0 9 11"><path d="M1 0.8L7.6 5.5L1 10.2z" fill="#fafafa" stroke="#555" stroke-width="1.3" stroke-linejoin="round"/></svg>
<svg style="left:50.5px;top:464px" width="13" height="9" viewBox="0 0 13 9"><path d="M0.3 4C3 -0.7 10 -0.7 12.7 4C10 8.7 3 8.7 0.3 4z" fill="#9b9b9b"/><circle cx="6.5" cy="4" r="2.3" fill="#dedede"/><circle cx="6.5" cy="4" r="1.2" fill="#9b9b9b"/></svg>
<svg style="left:71px;top:461px" width="14" height="14" viewBox="0 0 14 14"><path d="M1 3.5L3.5 1H12V10.5L9.5 13H1z" fill="#f4f4f4" stroke="#8a8a8a" stroke-width="0.9" stroke-linejoin="round"/><path d="M1 3.5H9.5V13M9.5 3.5L12 1" fill="none" stroke="#8a8a8a" stroke-width="0.8"/><circle cx="7" cy="8" r="1.6" fill="#e05a20"/><path d="M5 10.5L9 10.5M7 8V12" stroke="#e05a20" stroke-width="1.1"/></svg>
<div class="t" style="left:95.20px;top:463.58px;font-size:8.5px;color:#5e5e5e;font-weight:normal;transform:scale(0.998,1.000);transform-origin:0 7.20px;-webkit-text-stroke:0.2px #6a6a6a;">FRAME - CARBON -&gt; v48:1</div>
<div class="a" style="left:47px;top:479px;width:188px;height:16px;background:#f3f3f3;"></div>
<svg style="left:33px;top:482px" width="9" height="11" viewBox="0 0 9 11"><path d="M1 0.8L7.6 5.5L1 10.2z" fill="#fafafa" stroke="#555" stroke-width="1.3" stroke-linejoin="round"/></svg>
<svg style="left:50.5px;top:483px" width="13" height="9" viewBox="0 0 13 9"><path d="M0.3 4C3 -0.7 10 -0.7 12.7 4C10 8.7 3 8.7 0.3 4z" fill="#9b9b9b"/><circle cx="6.5" cy="4" r="2.3" fill="#dedede"/><circle cx="6.5" cy="4" r="1.2" fill="#9b9b9b"/></svg>
<svg style="left:71px;top:480px" width="14" height="14" viewBox="0 0 14 14"><path d="M1 3.5L3.5 1H12V10.5L9.5 13H1z" fill="#f4f4f4" stroke="#8a8a8a" stroke-width="0.9" stroke-linejoin="round"/><path d="M1 3.5H9.5V13M9.5 3.5L12 1" fill="none" stroke="#8a8a8a" stroke-width="0.8"/></svg>
<div class="t" style="left:95.20px;top:483.06px;font-size:8.5px;color:#5e5e5e;font-weight:normal;transform:scale(0.979,1.000);transform-origin:0 7.20px;-webkit-text-stroke:0.2px #6a6a6a;">SWINGARM - WELDMENT -&gt; v32:1</div>
<div class="a" style="left:47px;top:499px;width:186px;height:16px;background:#f3f3f3;"></div>
<svg style="left:33px;top:501px" width="9" height="11" viewBox="0 0 9 11"><path d="M1 0.8L7.6 5.5L1 10.2z" fill="#fafafa" stroke="#555" stroke-width="1.3" stroke-linejoin="round"/></svg>
<svg style="left:50.5px;top:503px" width="13" height="9" viewBox="0 0 13 9"><path d="M0.3 4C3 -0.7 10 -0.7 12.7 4C10 8.7 3 8.7 0.3 4z" fill="#9b9b9b"/><circle cx="6.5" cy="4" r="2.3" fill="#dedede"/><circle cx="6.5" cy="4" r="1.2" fill="#9b9b9b"/></svg>
<svg style="left:71px;top:500px" width="14" height="14" viewBox="0 0 14 14"><path d="M1 3.5L3.5 1H12V10.5L9.5 13H1z" fill="#f4f4f4" stroke="#8a8a8a" stroke-width="0.9" stroke-linejoin="round"/><path d="M1 3.5H9.5V13M9.5 3.5L12 1" fill="none" stroke="#8a8a8a" stroke-width="0.8"/></svg>
<div class="t" style="left:95.20px;top:502.54px;font-size:8.5px;color:#5e5e5e;font-weight:normal;transform:scale(1.011,1.000);transform-origin:0 7.20px;-webkit-text-stroke:0.2px #6a6a6a;">SS 6003 2RS (10 X 17 X 35mm):1</div>
<div class="a" style="left:47px;top:518px;width:162px;height:16px;background:#f3f3f3;"></div>
<svg style="left:33px;top:521px" width="9" height="11" viewBox="0 0 9 11"><path d="M1 0.8L7.6 5.5L1 10.2z" fill="#fafafa" stroke="#555" stroke-width="1.3" stroke-linejoin="round"/></svg>
<svg style="left:50.5px;top:522px" width="13" height="9" viewBox="0 0 13 9"><path d="M0.3 4C3 -0.7 10 -0.7 12.7 4C10 8.7 3 8.7 0.3 4z" fill="#9b9b9b"/><circle cx="6.5" cy="4" r="2.3" fill="#dedede"/><circle cx="6.5" cy="4" r="1.2" fill="#9b9b9b"/></svg>
<svg style="left:71px;top:519px" width="14" height="14" viewBox="0 0 14 14"><path d="M1 3.5L3.5 1H12V10.5L9.5 13H1z" fill="#f4f4f4" stroke="#8a8a8a" stroke-width="0.9" stroke-linejoin="round"/><path d="M1 3.5H9.5V13M9.5 3.5L12 1" fill="none" stroke="#8a8a8a" stroke-width="0.8"/></svg>
<div class="t" style="left:95.20px;top:522.02px;font-size:8.5px;color:#5e5e5e;font-weight:normal;transform:scale(0.980,1.000);transform-origin:0 7.20px;-webkit-text-stroke:0.2px #6a6a6a;">SPACER 3.5 X 17 X 30mm:1</div>
<div class="a" style="left:47px;top:538px;width:156px;height:16px;background:#f3f3f3;"></div>
<svg style="left:33px;top:540px" width="9" height="11" viewBox="0 0 9 11"><path d="M1 0.8L7.6 5.5L1 10.2z" fill="#fafafa" stroke="#555" stroke-width="1.3" stroke-linejoin="round"/></svg>
<svg style="left:50.5px;top:542px" width="13" height="9" viewBox="0 0 13 9"><path d="M0.3 4C3 -0.7 10 -0.7 12.7 4C10 8.7 3 8.7 0.3 4z" fill="#9b9b9b"/><circle cx="6.5" cy="4" r="2.3" fill="#dedede"/><circle cx="6.5" cy="4" r="1.2" fill="#9b9b9b"/></svg>
<svg style="left:71px;top:539px" width="14" height="14" viewBox="0 0 14 14"><path d="M1 3.5L3.5 1H12V10.5L9.5 13H1z" fill="#f4f4f4" stroke="#8a8a8a" stroke-width="0.9" stroke-linejoin="round"/><path d="M1 3.5H9.5V13M9.5 3.5L12 1" fill="none" stroke="#8a8a8a" stroke-width="0.8"/></svg>
<div class="t" style="left:95.20px;top:541.50px;font-size:8.5px;color:#5e5e5e;font-weight:normal;transform:scale(0.976,1.000);transform-origin:0 7.20px;-webkit-text-stroke:0.2px #6a6a6a;">BUSHING - 17mm X 85L:1</div>
<div class="a" style="left:47px;top:557px;width:165px;height:16px;background:#f3f3f3;"></div>
<svg style="left:33px;top:560px" width="9" height="11" viewBox="0 0 9 11"><path d="M1 0.8L7.6 5.5L1 10.2z" fill="#fafafa" stroke="#555" stroke-width="1.3" stroke-linejoin="round"/></svg>
<svg style="left:50.5px;top:561px" width="13" height="9" viewBox="0 0 13 9"><path d="M0.3 4C3 -0.7 10 -0.7 12.7 4C10 8.7 3 8.7 0.3 4z" fill="#9b9b9b"/><circle cx="6.5" cy="4" r="2.3" fill="#dedede"/><circle cx="6.5" cy="4" r="1.2" fill="#9b9b9b"/></svg>
<svg style="left:71px;top:558px" width="14" height="14" viewBox="0 0 14 14"><path d="M1 3.5L3.5 1H12V10.5L9.5 13H1z" fill="#f4f4f4" stroke="#8a8a8a" stroke-width="0.9" stroke-linejoin="round"/><path d="M1 3.5H9.5V13M9.5 3.5L12 1" fill="none" stroke="#8a8a8a" stroke-width="0.8"/></svg>
<div class="t" style="left:95.20px;top:560.98px;font-size:8.5px;color:#5e5e5e;font-weight:normal;transform:scale(0.940,1.000);transform-origin:0 7.20px;-webkit-text-stroke:0.2px #6a6a6a;">RETAINER BUSHING 17mm:1</div>
<div class="a" style="left:47px;top:577px;width:198px;height:16px;background:#f3f3f3;"></div>
<svg style="left:33px;top:579px" width="9" height="11" viewBox="0 0 9 11"><path d="M1 0.8L7.6 5.5L1 10.2z" fill="#fafafa" stroke="#555" stroke-width="1.3" stroke-linejoin="round"/></svg>
<svg style="left:50.5px;top:581px" width="13" height="9" viewBox="0 0 13 9"><path d="M0.3 4C3 -0.7 10 -0.7 12.7 4C10 8.7 3 8.7 0.3 4z" fill="#9b9b9b"/><circle cx="6.5" cy="4" r="2.3" fill="#dedede"/><circle cx="6.5" cy="4" r="1.2" fill="#9b9b9b"/></svg>
<svg style="left:71px;top:578px" width="14" height="14" viewBox="0 0 14 14"><path d="M1 3.5L3.5 1H12V10.5L9.5 13H1z" fill="#f4f4f4" stroke="#8a8a8a" stroke-width="0.9" stroke-linejoin="round"/><path d="M1 3.5H9.5V13M9.5 3.5L12 1" fill="none" stroke="#8a8a8a" stroke-width="0.8"/></svg>
<div class="t" style="left:95.20px;top:580.46px;font-size:8.5px;color:#5e5e5e;font-weight:normal;transform:scale(0.961,1.000);transform-origin:0 7.20px;-webkit-text-stroke:0.2px #6a6a6a;">SPACER BEARING ROCKER - MID I...</div>
<div class="a" style="left:47px;top:596px;width:123px;height:16px;background:#f3f3f3;"></div>
<svg style="left:33px;top:599px" width="9" height="11" viewBox="0 0 9 11"><path d="M1 0.8L7.6 5.5L1 10.2z" fill="#fafafa" stroke="#555" stroke-width="1.3" stroke-linejoin="round"/></svg>
<svg style="left:50.5px;top:600px" width="13" height="9" viewBox="0 0 13 9"><path d="M0.3 4C3 -0.7 10 -0.7 12.7 4C10 8.7 3 8.7 0.3 4z" fill="#9b9b9b"/><circle cx="6.5" cy="4" r="2.3" fill="#dedede"/><circle cx="6.5" cy="4" r="1.2" fill="#9b9b9b"/></svg>
<svg style="left:71px;top:597px" width="14" height="14" viewBox="0 0 14 14"><path d="M1 3.5L3.5 1H12V10.5L9.5 13H1z" fill="#f4f4f4" stroke="#8a8a8a" stroke-width="0.9" stroke-linejoin="round"/><path d="M1 3.5H9.5V13M9.5 3.5L12 1" fill="none" stroke="#8a8a8a" stroke-width="0.8"/></svg>
<div class="t" style="left:95.20px;top:599.94px;font-size:8.5px;color:#5e5e5e;font-weight:normal;transform:scale(0.948,1.000);transform-origin:0 7.20px;-webkit-text-stroke:0.2px #6a6a6a;">PIVOT ROCKER:1</div>
<div class="a" style="left:47px;top:616px;width:175px;height:16px;background:#f3f3f3;"></div>
<svg style="left:33px;top:618px" width="9" height="11" viewBox="0 0 9 11"><path d="M1 0.8L7.6 5.5L1 10.2z" fill="#fafafa" stroke="#555" stroke-width="1.3" stroke-linejoin="round"/></svg>
<svg style="left:50.5px;top:620px" width="13" height="9" viewBox="0 0 13 9"><path d="M0.3 4C3 -0.7 10 -0.7 12.7 4C10 8.7 3 8.7 0.3 4z" fill="#9b9b9b"/><circle cx="6.5" cy="4" r="2.3" fill="#dedede"/><circle cx="6.5" cy="4" r="1.2" fill="#9b9b9b"/></svg>
<svg style="left:71px;top:617px" width="14" height="14" viewBox="0 0 14 14"><path d="M1 3.5L3.5 1H12V10.5L9.5 13H1z" fill="#f4f4f4" stroke="#8a8a8a" stroke-width="0.9" stroke-linejoin="round"/><path d="M1 3.5H9.5V13M9.5 3.5L12 1" fill="none" stroke="#8a8a8a" stroke-width="0.8"/></svg>
<div class="t" style="left:95.20px;top:619.42px;font-size:8.5px;color:#5e5e5e;font-weight:normal;transform:scale(0.973,1.000);transform-origin:0 7.20px;-webkit-text-stroke:0.2px #6a6a6a;">FHCS M10 21.5mm X 0.70mm:1</div>
<div class="a" style="left:47px;top:635px;width:182px;height:16px;background:#f3f3f3;"></div>
<svg style="left:33px;top:638px" width="9" height="11" viewBox="0 0 9 11"><path d="M1 0.8L7.6 5.5L1 10.2z" fill="#fafafa" stroke="#555" stroke-width="1.3" stroke-linejoin="round"/></svg>
<svg style="left:50.5px;top:639px" width="13" height="9" viewBox="0 0 13 9"><path d="M0.3 4C3 -0.7 10 -0.7 12.7 4C10 8.7 3 8.7 0.3 4z" fill="#9b9b9b"/><circle cx="6.5" cy="4" r="2.3" fill="#dedede"/><circle cx="6.5" cy="4" r="1.2" fill="#9b9b9b"/></svg>
<svg style="left:71px;top:636px" width="14" height="14" viewBox="0 0 14 14"><path d="M1 3.5L3.5 1H12V10.5L9.5 13H1z" fill="#f4f4f4" stroke="#8a8a8a" stroke-width="0.9" stroke-linejoin="round"/><path d="M1 3.5H9.5V13M9.5 3.5L12 1" fill="none" stroke="#8a8a8a" stroke-width="0.8"/></svg>
<div class="t" style="left:95.20px;top:638.90px;font-size:8.5px;color:#5e5e5e;font-weight:normal;transform:scale(0.948,1.000);transform-origin:0 7.20px;-webkit-text-stroke:0.2px #6a6a6a;">CIRCLIP INTERNAL 36.5mm OD:1</div>
<div class="a" style="left:47px;top:654px;width:182px;height:16px;background:#f3f3f3;"></div>
<svg style="left:33px;top:657px" width="9" height="11" viewBox="0 0 9 11"><path d="M1 0.8L7.6 5.5L1 10.2z" fill="#fafafa" stroke="#555" stroke-width="1.3" stroke-linejoin="round"/></svg>
<svg style="left:50.5px;top:658px" width="13" height="9" viewBox="0 0 13 9"><path d="M0.3 4C3 -0.7 10 -0.7 12.7 4C10 8.7 3 8.7 0.3 4z" fill="#9b9b9b"/><circle cx="6.5" cy="4" r="2.3" fill="#dedede"/><circle cx="6.5" cy="4" r="1.2" fill="#9b9b9b"/></svg>
<svg style="left:71px;top:655px" width="14" height="14" viewBox="0 0 14 14"><path d="M1 3.5L3.5 1H12V10.5L9.5 13H1z" fill="#f4f4f4" stroke="#8a8a8a" stroke-width="0.9" stroke-linejoin="round"/><path d="M1 3.5H9.5V13M9.5 3.5L12 1" fill="none" stroke="#8a8a8a" stroke-width="0.8"/></svg>
<div class="t" style="left:95.20px;top:658.38px;font-size:8.5px;color:#5e5e5e;font-weight:normal;transform:scale(0.948,1.000);transform-origin:0 7.20px;-webkit-text-stroke:0.2px #6a6a6a;">CIRCLIP INTERNAL 27.9mm OD:1</div>
<div class="a" style="left:47px;top:674px;width:198px;height:16px;background:#f3f3f3;"></div>
<svg style="left:33px;top:676px" width="9" height="11" viewBox="0 0 9 11"><path d="M1 0.8L7.6 5.5L1 10.2z" fill="#fafafa" stroke="#555" stroke-width="1.3" stroke-linejoin="round"/></svg>
<svg style="left:50.5px;top:678px" width="13" height="9" viewBox="0 0 13 9"><path d="M0.3 4C3 -0.7 10 -0.7 12.7 4C10 8.7 3 8.7 0.3 4z" fill="#9b9b9b"/><circle cx="6.5" cy="4" r="2.3" fill="#dedede"/><circle cx="6.5" cy="4" r="1.2" fill="#9b9b9b"/></svg>
<svg style="left:71px;top:675px" width="14" height="14" viewBox="0 0 14 14"><path d="M1 3.5L3.5 1H12V10.5L9.5 13H1z" fill="#f4f4f4" stroke="#8a8a8a" stroke-width="0.9" stroke-linejoin="round"/><path d="M1 3.5H9.5V13M9.5 3.5L12 1" fill="none" stroke="#8a8a8a" stroke-width="0.8"/></svg>
<div class="t" style="left:95.20px;top:677.86px;font-size:8.5px;color:#5e5e5e;font-weight:normal;transform:scale(0.967,1.000);transform-origin:0 7.20px;-webkit-text-stroke:0.2px #6a6a6a;">COVER PIVOT ROCKER M27.9 X 1(...</div>
<div class="a" style="left:47px;top:693px;width:188px;height:16px;background:#f3f3f3;"></div>
<svg style="left:33px;top:696px" width="9" height="11" viewBox="0 0 9 11"><path d="M1 0.8L7.6 5.5L1 10.2z" fill="#fafafa" stroke="#555" stroke-width="1.3" stroke-linejoin="round"/></svg>
<svg style="left:50.5px;top:697px" width="13" height="9" viewBox="0 0 13 9"><path d="M0.3 4C3 -0.7 10 -0.7 12.7 4C10 8.7 3 8.7 0.3 4z" fill="#9b9b9b"/><circle cx="6.5" cy="4" r="2.3" fill="#dedede"/><circle cx="6.5" cy="4" r="1.2" fill="#9b9b9b"/></svg>
<svg style="left:71px;top:694px" width="14" height="14" viewBox="0 0 14 14"><path d="M1 3.5L3.5 1H8V6H12V10.5L9.5 13H1z" fill="#f4f4f4" stroke="#8a8a8a" stroke-width="0.9" stroke-linejoin="round"/><path d="M8 6L9.5 4.5H13" fill="none" stroke="#8a8a8a" stroke-width="0.8"/></svg>
<div class="t" style="left:95.20px;top:697.34px;font-size:8.5px;color:#5e5e5e;font-weight:normal;transform:scale(0.979,1.000);transform-origin:0 7.20px;-webkit-text-stroke:0.2px #6a6a6a;">MANITOU METEL (215mm) -&gt; v2:1</div>
<div class="a" style="left:47px;top:713px;width:188px;height:16px;background:#f3f3f3;"></div>
<svg style="left:33px;top:715px" width="9" height="11" viewBox="0 0 9 11"><path d="M1 0.8L7.6 5.5L1 10.2z" fill="#fafafa" stroke="#555" stroke-width="1.3" stroke-linejoin="round"/></svg>
<svg style="left:50.5px;top:717px" width="13" height="9" viewBox="0 0 13 9"><path d="M0.3 4C3 -0.7 10 -0.7 12.7 4C10 8.7 3 8.7 0.3 4z" fill="#9b9b9b"/><circle cx="6.5" cy="4" r="2.3" fill="#dedede"/><circle cx="6.5" cy="4" r="1.2" fill="#9b9b9b"/></svg>
<svg style="left:71px;top:714px" width="14" height="14" viewBox="0 0 14 14"><path d="M1 3.5L3.5 1H12V10.5L9.5 13H1z" fill="#f4f4f4" stroke="#8a8a8a" stroke-width="0.9" stroke-linejoin="round"/><path d="M1 3.5H9.5V13M9.5 3.5L12 1" fill="none" stroke="#8a8a8a" stroke-width="0.8"/></svg>
<div class="t" style="left:95.20px;top:716.82px;font-size:8.5px;color:#5e5e5e;font-weight:normal;transform:scale(1.012,1.000);transform-origin:0 7.20px;-webkit-text-stroke:0.2px #6a6a6a;">SS 6003 2RS (10 X 17 X 35mm):2</div>
<div class="a" style="left:47px;top:732px;width:163px;height:16px;background:#f3f3f3;"></div>
<svg style="left:33px;top:735px" width="9" height="11" viewBox="0 0 9 11"><path d="M1 0.8L7.6 5.5L1 10.2z" fill="#fafafa" stroke="#555" stroke-width="1.3" stroke-linejoin="round"/></svg>
<svg style="left:50.5px;top:736px" width="13" height="9" viewBox="0 0 13 9"><path d="M0.3 4C3 -0.7 10 -0.7 12.7 4C10 8.7 3 8.7 0.3 4z" fill="#9b9b9b"/><circle cx="6.5" cy="4" r="2.3" fill="#dedede"/><circle cx="6.5" cy="4" r="1.2" fill="#9b9b9b"/></svg>
<svg style="left:71px;top:733px" width="14" height="14" viewBox="0 0 14 14"><path d="M1 3.5L3.5 1H12V10.5L9.5 13H1z" fill="#f4f4f4" stroke="#8a8a8a" stroke-width="0.9" stroke-linejoin="round"/><path d="M1 3.5H9.5V13M9.5 3.5L12 1" fill="none" stroke="#8a8a8a" stroke-width="0.8"/></svg>
<div class="t" style="left:95.20px;top:736.30px;font-size:8.5px;color:#5e5e5e;font-weight:normal;transform:scale(0.985,1.000);transform-origin:0 7.20px;-webkit-text-stroke:0.2px #6a6a6a;">SPACER 3.5 X 17 X 30mm:2</div>
<div class="a" style="left:47px;top:752px;width:198px;height:16px;background:#f3f3f3;"></div>
<svg style="left:33px;top:754px" width="9" height="11" viewBox="0 0 9 11"><path d="M1 0.8L7.6 5.5L1 10.2z" fill="#fafafa" stroke="#555" stroke-width="1.3" stroke-linejoin="round"/></svg>
<svg style="left:50.5px;top:756px" width="13" height="9" viewBox="0 0 13 9"><path d="M0.3 4C3 -0.7 10 -0.7 12.7 4C10 8.7 3 8.7 0.3 4z" fill="#9b9b9b"/><circle cx="6.5" cy="4" r="2.3" fill="#dedede"/><circle cx="6.5" cy="4" r="1.2" fill="#9b9b9b"/></svg>
<svg style="left:71px;top:753px" width="14" height="14" viewBox="0 0 14 14"><path d="M1 3.5L3.5 1H12V10.5L9.5 13H1z" fill="#f4f4f4" stroke="#8a8a8a" stroke-width="0.9" stroke-linejoin="round"/><path d="M1 3.5H9.5V13M9.5 3.5L12 1" fill="none" stroke="#8a8a8a" stroke-width="0.8"/></svg>
<div class="t" style="left:95.20px;top:755.78px;font-size:8.5px;color:#5e5e5e;font-weight:normal;transform:scale(0.961,1.000);transform-origin:0 7.20px;-webkit-text-stroke:0.2px #6a6a6a;">SPACER BEARING ROCKER - MID I...</div>
<div class="a" style="left:47px;top:771px;width:123px;height:16px;background:#f3f3f3;"></div>
<svg style="left:33px;top:774px" width="9" height="11" viewBox="0 0 9 11"><path d="M1 0.8L7.6 5.5L1 10.2z" fill="#fafafa" stroke="#555" stroke-width="1.3" stroke-linejoin="round"/></svg>
<svg style="left:50.5px;top:775px" width="13" height="9" viewBox="0 0 13 9"><path d="M0.3 4C3 -0.7 10 -0.7 12.7 4C10 8.7 3 8.7 0.3 4z" fill="#9b9b9b"/><circle cx="6.5" cy="4" r="2.3" fill="#dedede"/><circle cx="6.5" cy="4" r="1.2" fill="#9b9b9b"/></svg>
<svg style="left:71px;top:772px" width="14" height="14" viewBox="0 0 14 14"><path d="M1 3.5L3.5 1H12V10.5L9.5 13H1z" fill="#f4f4f4" stroke="#8a8a8a" stroke-width="0.9" stroke-linejoin="round"/><path d="M1 3.5H9.5V13M9.5 3.5L12 1" fill="none" stroke="#8a8a8a" stroke-width="0.8"/></svg>
<div class="t" style="left:95.20px;top:775.26px;font-size:8.5px;color:#5e5e5e;font-weight:normal;transform:scale(0.948,1.000);transform-origin:0 7.20px;-webkit-text-stroke:0.2px #6a6a6a;">PIVOT ROCKER:2</div>
<div class="a" style="left:47px;top:791px;width:182px;height:16px;background:#f3f3f3;"></div>
<svg style="left:33px;top:793px" width="9" height="11" viewBox="0 0 9 11"><path d="M1 0.8L7.6 5.5L1 10.2z" fill="#fafafa" stroke="#555" stroke-width="1.3" stroke-linejoin="round"/></svg>
<svg style="left:50.5px;top:795px" width="13" height="9" viewBox="0 0 13 9"><path d="M0.3 4C3 -0.7 10 -0.7 12.7 4C10 8.7 3 8.7 0.3 4z" fill="#9b9b9b"/><circle cx="6.5" cy="4" r="2.3" fill="#dedede"/><circle cx="6.5" cy="4" r="1.2" fill="#9b9b9b"/></svg>
<svg style="left:71px;top:792px" width="14" height="14" viewBox="0 0 14 14"><path d="M1 3.5L3.5 1H12V10.5L9.5 13H1z" fill="#f4f4f4" stroke="#8a8a8a" stroke-width="0.9" stroke-linejoin="round"/><path d="M1 3.5H9.5V13M9.5 3.5L12 1" fill="none" stroke="#8a8a8a" stroke-width="0.8"/></svg>
<div class="t" style="left:95.20px;top:794.74px;font-size:8.5px;color:#5e5e5e;font-weight:normal;transform:scale(1.005,1.000);transform-origin:0 7.20px;-webkit-text-stroke:0.2px #6a6a6a;">SS 6000 2RS (8 X 10 X 26mm):3</div>
<div class="a" style="left:4px;top:819px;width:244px;height:21px;background:#f0f0f0;border:1px solid #dcdcdc;"></div>
<div class="t" style="left:24.80px;top:824.58px;font-size:9.0px;color:#8a8a8a;font-weight:normal;transform:scale(0.871,1.000);transform-origin:0 7.62px;">COMMENTS</div>
<svg style="left:230px;top:825px" width="9" height="9" viewBox="0 0 9 9"><circle cx="4.5" cy="4.5" r="3.9" fill="#111"/><path d="M4.5 2.3V6.7M2.3 4.5H6.7" stroke="#fff" stroke-width="1.2"/></svg>
<div class="a" style="left:244px;top:825px;width:1px;height:9px;background:#999;"></div>
<svg style="left:0;top:0" width="1560" height="877" viewBox="0 0 1560 877"><defs>
<linearGradient id="gr" x1="0" x2="1" y1="0" y2="0"><stop offset="0" stop-color="#6e1418"/><stop offset="0.15" stop-color="#8f1b20"/><stop offset="0.48" stop-color="#bf232c"/><stop offset="0.7" stop-color="#a81e25"/><stop offset="0.9" stop-color="#83191e"/><stop offset="1" stop-color="#5e1115"/></linearGradient>
<linearGradient id="gb" x1="0" x2="1" y1="0" y2="0"><stop offset="0" stop-color="#1b4274"/><stop offset="0.15" stop-color="#225aa0"/><stop offset="0.48" stop-color="#2b6db4"/><stop offset="0.75" stop-color="#2762a8"/><stop offset="0.92" stop-color="#1f4f8a"/><stop offset="1" stop-color="#183c68"/></linearGradient>
<linearGradient id="gc" x1="0" x2="1" y1="0" y2="0"><stop offset="0" stop-color="#b4b4b4"/><stop offset="0.5" stop-color="#c9c9c9"/><stop offset="1" stop-color="#b8b8b8"/></linearGradient>
<filter id="bl" x="-20%" y="-20%" width="140%" height="140%"><feGaussianBlur stdDeviation="3"/></filter>
<filter id="bl2" x="-20%" y="-20%" width="140%" height="140%"><feGaussianBlur stdDeviation="1.6"/></filter>
</defs><clipPath id="fc"><path d="M637.0 410.0 C642.7 405.5 638.0 409.2 644.0 413.0 C650.0 416.8 660.9 426.9 672.8 432.8 C684.7 438.7 701.3 444.1 715.5 448.4 C729.7 452.7 743.8 456.2 758.0 458.4 C772.2 460.5 790.0 462.0 801.0 461.3 C812.0 460.6 815.2 459.2 823.8 454.0 C832.3 448.8 844.6 438.2 852.3 430.0 C860.0 421.8 862.0 411.3 870.0 405.0 C878.0 398.7 887.5 394.2 900.0 392.0 C912.5 389.8 936.5 391.8 945.0 392.0 C953.5 392.2 942.7 395.9 951.0 393.0 C959.3 390.1 978.3 382.8 994.7 374.9 C1011.1 367.0 1031.2 355.0 1049.5 345.7 C1067.8 336.4 1090.8 326.5 1104.2 319.2 C1117.6 311.9 1120.5 305.4 1129.8 301.9 C1139.1 298.4 1156.3 289.6 1160.0 298.0 C1163.7 306.4 1158.2 342.5 1152.0 352.0 C1145.8 361.5 1136.5 349.8 1122.5 354.8 C1108.5 359.8 1086.0 372.8 1067.7 382.2 C1049.5 391.6 1027.6 403.4 1013.0 411.4 C998.4 419.4 987.5 424.9 980.0 430.0 C972.5 435.1 970.5 438.0 968.0 442.0 C965.5 446.0 963.5 449.4 964.7 454.0 C965.9 458.6 970.0 466.1 975.3 469.6 C980.6 473.2 983.5 473.5 996.4 475.3 C1009.3 477.1 1034.0 478.8 1052.8 480.2 C1071.6 481.6 1093.1 482.2 1109.3 483.7 C1125.5 485.2 1141.5 484.3 1150.0 489.0 C1158.5 493.7 1161.2 504.4 1160.0 512.0 C1158.8 519.6 1151.5 531.7 1143.0 534.5 C1134.5 537.3 1124.3 530.4 1109.3 528.9 C1094.3 527.4 1071.6 526.5 1052.8 525.3 C1034.0 524.1 1014.0 523.7 996.4 521.8 C978.8 519.9 961.1 515.8 947.0 514.0 C932.9 512.2 922.3 511.3 912.0 511.0 C901.7 510.7 888.2 508.7 885.0 512.0 C881.8 515.3 889.7 518.9 892.7 530.6 C895.7 542.3 905.6 573.1 903.0 582.0 C900.4 590.9 884.5 588.5 877.0 584.0 C869.5 579.5 865.9 564.8 858.0 555.3 C850.1 545.8 838.0 532.7 829.5 526.8 C821.0 520.9 816.2 519.2 806.7 519.7 C797.2 520.2 785.3 523.8 772.5 529.7 C759.7 535.6 744.0 545.3 729.8 555.3 C715.5 565.3 699.4 579.5 687.0 589.5 C674.6 599.5 666.0 613.5 655.7 615.2 C645.4 617.0 628.3 604.3 625.0 600.0 C621.7 595.7 633.0 594.1 635.7 589.5 C638.4 584.9 637.6 579.0 641.4 572.4 C645.2 565.8 650.9 557.2 658.5 549.6 C666.1 542.0 680.1 534.4 687.0 526.8 C693.9 519.2 700.0 510.2 700.0 504.0 C700.0 497.8 693.9 494.1 687.0 489.8 C680.1 485.5 666.8 482.7 658.5 478.4 C650.2 474.1 645.1 470.4 637.0 464.0 C628.9 457.6 610.0 449.0 610.0 440.0 C610.0 431.0 631.3 414.5 637.0 410.0 Z"/></clipPath><path d="M637.0 410.0 C642.7 405.5 638.0 409.2 644.0 413.0 C650.0 416.8 660.9 426.9 672.8 432.8 C684.7 438.7 701.3 444.1 715.5 448.4 C729.7 452.7 743.8 456.2 758.0 458.4 C772.2 460.5 790.0 462.0 801.0 461.3 C812.0 460.6 815.2 459.2 823.8 454.0 C832.3 448.8 844.6 438.2 852.3 430.0 C860.0 421.8 862.0 411.3 870.0 405.0 C878.0 398.7 887.5 394.2 900.0 392.0 C912.5 389.8 936.5 391.8 945.0 392.0 C953.5 392.2 942.7 395.9 951.0 393.0 C959.3 390.1 978.3 382.8 994.7 374.9 C1011.1 367.0 1031.2 355.0 1049.5 345.7 C1067.8 336.4 1090.8 326.5 1104.2 319.2 C1117.6 311.9 1120.5 305.4 1129.8 301.9 C1139.1 298.4 1156.3 289.6 1160.0 298.0 C1163.7 306.4 1158.2 342.5 1152.0 352.0 C1145.8 361.5 1136.5 349.8 1122.5 354.8 C1108.5 359.8 1086.0 372.8 1067.7 382.2 C1049.5 391.6 1027.6 403.4 1013.0 411.4 C998.4 419.4 987.5 424.9 980.0 430.0 C972.5 435.1 970.5 438.0 968.0 442.0 C965.5 446.0 963.5 449.4 964.7 454.0 C965.9 458.6 970.0 466.1 975.3 469.6 C980.6 473.2 983.5 473.5 996.4 475.3 C1009.3 477.1 1034.0 478.8 1052.8 480.2 C1071.6 481.6 1093.1 482.2 1109.3 483.7 C1125.5 485.2 1141.5 484.3 1150.0 489.0 C1158.5 493.7 1161.2 504.4 1160.0 512.0 C1158.8 519.6 1151.5 531.7 1143.0 534.5 C1134.5 537.3 1124.3 530.4 1109.3 528.9 C1094.3 527.4 1071.6 526.5 1052.8 525.3 C1034.0 524.1 1014.0 523.7 996.4 521.8 C978.8 519.9 961.1 515.8 947.0 514.0 C932.9 512.2 922.3 511.3 912.0 511.0 C901.7 510.7 888.2 508.7 885.0 512.0 C881.8 515.3 889.7 518.9 892.7 530.6 C895.7 542.3 905.6 573.1 903.0 582.0 C900.4 590.9 884.5 588.5 877.0 584.0 C869.5 579.5 865.9 564.8 858.0 555.3 C850.1 545.8 838.0 532.7 829.5 526.8 C821.0 520.9 816.2 519.2 806.7 519.7 C797.2 520.2 785.3 523.8 772.5 529.7 C759.7 535.6 744.0 545.3 729.8 555.3 C715.5 565.3 699.4 579.5 687.0 589.5 C674.6 599.5 666.0 613.5 655.7 615.2 C645.4 617.0 628.3 604.3 625.0 600.0 C621.7 595.7 633.0 594.1 635.7 589.5 C638.4 584.9 637.6 579.0 641.4 572.4 C645.2 565.8 650.9 557.2 658.5 549.6 C666.1 542.0 680.1 534.4 687.0 526.8 C693.9 519.2 700.0 510.2 700.0 504.0 C700.0 497.8 693.9 494.1 687.0 489.8 C680.1 485.5 666.8 482.7 658.5 478.4 C650.2 474.1 645.1 470.4 637.0 464.0 C628.9 457.6 610.0 449.0 610.0 440.0 C610.0 431.0 631.3 414.5 637.0 410.0 Z" fill="#b9b9b9"/><g clip-path="url(#fc)"><path d="M637.0 410.0 C642.7 405.5 638.0 409.2 644.0 413.0 C650.0 416.8 660.9 426.9 672.8 432.8 C684.7 438.7 701.3 444.1 715.5 448.4 C729.7 452.7 743.8 456.2 758.0 458.4 C772.2 460.5 790.0 462.0 801.0 461.3 C812.0 460.6 815.2 459.2 823.8 454.0 C832.3 448.8 844.6 438.2 852.3 430.0 C860.0 421.8 862.0 411.3 870.0 405.0 C878.0 398.7 887.5 394.2 900.0 392.0 C912.5 389.8 936.5 391.8 945.0 392.0 C953.5 392.2 942.7 395.9 951.0 393.0 C959.3 390.1 978.3 382.8 994.7 374.9 C1011.1 367.0 1031.2 355.0 1049.5 345.7 C1067.8 336.4 1090.8 326.5 1104.2 319.2 C1117.6 311.9 1120.5 305.4 1129.8 301.9 C1139.1 298.4 1156.3 289.6 1160.0 298.0 C1163.7 306.4 1158.2 342.5 1152.0 352.0 C1145.8 361.5 1136.5 349.8 1122.5 354.8 C1108.5 359.8 1086.0 372.8 1067.7 382.2 C1049.5 391.6 1027.6 403.4 1013.0 411.4 C998.4 419.4 987.5 424.9 980.0 430.0 C972.5 435.1 970.5 438.0 968.0 442.0 C965.5 446.0 963.5 449.4 964.7 454.0 C965.9 458.6 970.0 466.1 975.3 469.6 C980.6 473.2 983.5 473.5 996.4 475.3 C1009.3 477.1 1034.0 478.8 1052.8 480.2 C1071.6 481.6 1093.1 482.2 1109.3 483.7 C1125.5 485.2 1141.5 484.3 1150.0 489.0 C1158.5 493.7 1161.2 504.4 1160.0 512.0 C1158.8 519.6 1151.5 531.7 1143.0 534.5 C1134.5 537.3 1124.3 530.4 1109.3 528.9 C1094.3 527.4 1071.6 526.5 1052.8 525.3 C1034.0 524.1 1014.0 523.7 996.4 521.8 C978.8 519.9 961.1 515.8 947.0 514.0 C932.9 512.2 922.3 511.3 912.0 511.0 C901.7 510.7 888.2 508.7 885.0 512.0 C881.8 515.3 889.7 518.9 892.7 530.6 C895.7 542.3 905.6 573.1 903.0 582.0 C900.4 590.9 884.5 588.5 877.0 584.0 C869.5 579.5 865.9 564.8 858.0 555.3 C850.1 545.8 838.0 532.7 829.5 526.8 C821.0 520.9 816.2 519.2 806.7 519.7 C797.2 520.2 785.3 523.8 772.5 529.7 C759.7 535.6 744.0 545.3 729.8 555.3 C715.5 565.3 699.4 579.5 687.0 589.5 C674.6 599.5 666.0 613.5 655.7 615.2 C645.4 617.0 628.3 604.3 625.0 600.0 C621.7 595.7 633.0 594.1 635.7 589.5 C638.4 584.9 637.6 579.0 641.4 572.4 C645.2 565.8 650.9 557.2 658.5 549.6 C666.1 542.0 680.1 534.4 687.0 526.8 C693.9 519.2 700.0 510.2 700.0 504.0 C700.0 497.8 693.9 494.1 687.0 489.8 C680.1 485.5 666.8 482.7 658.5 478.4 C650.2 474.1 645.1 470.4 637.0 464.0 C628.9 457.6 610.0 449.0 610.0 440.0 C610.0 431.0 631.3 414.5 637.0 410.0 Z" fill="none" stroke="#9c9c9c" stroke-width="7" filter="url(#bl)" opacity="0.8"/><g filter="url(#bl)"><path d="M670 445 Q740 462 810 470" fill="none" stroke="#c4c4c4" stroke-width="10"/><ellipse cx="800" cy="477" rx="16" ry="7" fill="#cdcdcd"/><path d="M860 470 Q900 455 925 430" fill="none" stroke="#c2c2c2" stroke-width="10"/><path d="M990 400 Q1060 365 1125 328" fill="none" stroke="#bababa" stroke-width="9"/><path d="M950 497 Q1060 505 1150 512" fill="none" stroke="#b0b0b0" stroke-width="26"/><path d="M960 392 Q1060 350 1135 305" fill="none" stroke="#aaaaaa" stroke-width="8"/></g><g filter="url(#bl2)"><path d="M652 600 Q690 565 730 538 Q770 515 812 503" fill="none" stroke="#d8d8d8" stroke-width="5"/><path d="M830 505 Q860 525 882 552" fill="none" stroke="#d4d4d4" stroke-width="3.5"/></g></g><path d="M471.3 400.0 A86.3 22 0 0 1 643.9 400.0 L644.0 449.0 A86 14 0 0 1 472.0 449.0 Z" fill="url(#gc)" opacity="0.92" stroke="#a9a9a9" stroke-width="0.7"/><path d="M482.0 612.0 A87.5 17 0 0 1 657.0 612.0 L657.5 651.0 A87.5 16 0 0 1 482.5 651.0 Z" fill="url(#gc)" opacity="0.92" stroke="#a9a9a9" stroke-width="0.7"/><path d="M866.2 385.0 A42.3 12 0 0 1 950.8 385.0 L951.0 423.0 A42 8 0 0 1 867.0 423.0 Z" fill="url(#gc)" opacity="0.9" stroke="#a9a9a9" stroke-width="0.7"/><path d="M877.5 590.0 A41.5 11 0 0 1 960.5 590.0 L961.0 628.0 A41.5 10 0 0 1 878.0 628.0 Z" fill="url(#gc)" opacity="0.92" stroke="#a9a9a9" stroke-width="0.7"/><path d="M1130.5 287.0 A53 13.3 0 0 1 1236.5 287.0 L1237.0 322.0 A53 10 0 0 1 1131.0 322.0 Z" fill="url(#gc)" opacity="0.9" stroke="#a9a9a9" stroke-width="0.7"/><path d="M1142.5 489.0 A53 11 0 0 1 1248.5 489.0 L1249.0 532.0 A53 12 0 0 1 1143.0 532.0 Z" fill="url(#gc)" opacity="0.92" stroke="#a9a9a9" stroke-width="0.7"/><g filter="url(#bl2)" fill="#8a8a8a" opacity="0.85"><path d="M866 444 L878 433 L886 440 L887 466 L879 452 L868 449z"/><path d="M866 412 Q870 425 886 431 L886 420 Q874 418 868 410z" fill="#9a9a9a"/><path d="M932 420 Q945 412 951 400 L951 418 Q945 426 932 430z" fill="#999"/><path d="M628 436 L645 446 L630 449z" fill="#8e8e8e"/><path d="M1141 489 L1152 494 L1141 498z" fill="#8e8e8e"/></g><path d="M492.5 445.5 A67.5 12.5 0 0 0 627.5 445.5 L636.3 608.3 A67.8 14.7 0 0 1 500.7 608.3 Z" fill="url(#gr)" /><path d="M500.7 608.3 A67.8 14.7 0 0 0 636.3 608.3 L639.0 645.0 A68 16.4 0 0 1 503.0 645.0 Z" fill="url(#gb)" /><path d="M489.6 401.0 A67.7 18.3 0 0 0 625.0 401.0 L627.5 445.5 A67.5 12.5 0 0 1 492.5 445.5 Z" fill="url(#gb)" /><ellipse cx="557.3" cy="401" rx="67.7" ry="18.3" fill="#cfc6b6" stroke="#555" stroke-width="0.6"/><path d="M492.5 445.5 A67.5 12.5 0 0 0 627.5 445.5 L628.0 451.0 A67.5 13 0 0 1 493.0 451.0 Z" fill="#5a1a1c" opacity="0.45"/><path d="M886.7 423.5 A23.8 6 0 0 0 934.3 423.5 L947.0 591.5 A24.5 6.5 0 0 1 898.0 591.5 Z" fill="url(#gr)" /><path d="M898.0 591.5 A24.5 6.5 0 0 0 947.0 591.5 L948.5 624.0 A24.5 7.5 0 0 1 899.5 624.0 Z" fill="url(#gb)" /><path d="M885.4 386.6 A23.6 7.2 0 0 0 932.6 386.6 L934.3 423.5 A23.8 6 0 0 1 886.7 423.5 Z" fill="url(#gb)" /><ellipse cx="909" cy="386.6" rx="23.6" ry="7.2" fill="#d2c9b9" stroke="#555" stroke-width="0.6"/><path d="M886.7 423.5 A23.8 6 0 0 0 934.3 423.5 L934.5 427.0 A23.8 6.2 0 0 1 886.9 427.0 Z" fill="#5a1a1c" opacity="0.45"/><path d="M1150.5 333.0 A34.5 9 0 0 0 1219.5 333.0 L1231.1 529.0 A34.6 9.5 0 0 1 1161.9 529.0 Z" fill="url(#gb)" /><path d="M1149.3 288.0 A34.2 8 0 0 0 1217.7 288.0 L1219.5 333.0 A34.5 9 0 0 1 1150.5 333.0 Z" fill="url(#gb)" /><ellipse cx="1183.5" cy="288" rx="34.2" ry="8" fill="#d2c9b9" stroke="#555" stroke-width="0.6"/><path d="M1141.5 328.5 A45 10 0 0 1 1231.5 328.5 L1238.0 491.0 A43.5 13.5 0 0 1 1151.0 491.0 Z" fill="url(#gr)" /><path d="M1149.3 288.0 A34.2 8 0 0 0 1217.7 288.0 L1219.5 333.0 A34.5 9 0 0 1 1150.5 333.0 Z" fill="url(#gb)" opacity="0"/><path d="M1149.3 288 A34.2 8 0 0 0 1217.7 288 L1218.5 325 A45 10 0 0 0 1149 327 Z" fill="url(#gb)"/><ellipse cx="1186.5" cy="328.5" rx="45" ry="10" fill="#6e2024" opacity="0.6"/><path d="M1141.5 328.5 A45 10 0 0 0 1231.5 328.5 L1232.3 334.0 A44.8 10.5 0 0 1 1142.7 334.0 Z" fill="#5a1a1c" opacity="0.45"/><path d="M1149.3 288 A34.2 8 0 0 0 1217.7 288 L1218.5 323 A34.5 9 0 0 1 1150 326 Z" fill="url(#gb)"/></svg>
<div class="a" style="left:1289px;top:221px;width:269px;height:597px;background:#f0f0f0;border:1px solid #d6d6d6;"></div>
<div class="a" style="left:1290px;top:222px;width:267px;height:19px;background:#f0f0f0;border-bottom:1px solid #dddddd;"></div>
<div class="a" style="left:1291px;top:227px;width:1px;height:8px;background:#888;"></div>
<div class="a" style="left:1293px;top:227px;width:1px;height:8px;background:#bbb;"></div>
<svg style="left:1298px;top:226px" width="9" height="9" viewBox="0 0 9 9"><circle cx="4.5" cy="4.5" r="3.8" fill="#111"/><rect x="2.2" y="3.8" width="4.6" height="1.4" fill="#fff"/></svg>
<div class="t" style="left:1309.70px;top:226.58px;font-size:9.0px;color:#7c7c7c;font-weight:normal;transform:scale(0.905,1.000);transform-origin:0 7.62px;">AUTOMATED MODELING</div>
<svg style="left:1544px;top:227px" width="10" height="8" viewBox="0 0 10 8"><path d="M0.5 0.8L4.5 4L0.5 7.2z M4.8 0.8L8.8 4L4.8 7.2z" fill="#222"/></svg>
<div class="a" style="left:1550px;top:241px;width:5px;height:547px;background:#c4c4c4;"></div>
<div class="a" style="left:1550px;top:321px;width:5px;height:429px;background:#979797;border-radius:2px;"></div>
<div class="t" style="left:1300.50px;top:245.58px;font-size:9.0px;color:#6a6a6a;font-weight:normal;transform:scale(0.949,1.000);transform-origin:0 7.62px;">Operation</div>
<div class="a" style="left:1380px;top:241px;width:151px;height:19px;background:#ffffff;border:1px solid #e6e6e6;"></div>
<svg style="left:1382px;top:243px" width="14" height="15" viewBox="0 0 14 15"><path d="M1 4Q1 2 3 2H9Q11 2 11 4V11Q11 13 9 13H3Q1 13 1 11z" fill="#e4e4e4" stroke="#999" stroke-width="0.8"/><circle cx="10" cy="3.3" r="2.6" fill="#f5b400"/></svg>
<div class="t" style="left:1399.60px;top:245.98px;font-size:9.0px;color:#555555;font-weight:normal;transform:scale(0.985,1.000);transform-origin:0 7.62px;">New Body</div>
<svg style="left:1522px;top:247px" width="5" height="4" viewBox="0 0 5 4"><path d="M0 0.3h4.6L2.3 3.3z" fill="#333"/></svg>
<div class="a" style="left:1297px;top:262px;width:243px;height:22px;background:#f0f0f0;border:1px solid #dddddd;"></div>
<svg style="left:1371px;top:267px" width="12" height="12" viewBox="0 0 12 12"><circle cx="6" cy="6" r="5.2" fill="none" stroke="#c9c9c9" stroke-width="1.3"/><circle cx="6" cy="6" r="2.8" fill="none" stroke="#c9c9c9" stroke-width="1.1"/><path d="M6 3.2V6H9" fill="none" stroke="#c9c9c9" stroke-width="0.9"/></svg>
<div class="t" style="left:1387.30px;top:268.98px;font-size:9.0px;color:#c2c2c2;font-weight:normal;transform:scale(0.971,1.000);transform-origin:0 7.62px;">Regenerate Shapes</div>
<div class="a" style="left:1292px;top:290px;width:254px;height:1px;background:#dedede;"></div>
<svg style="left:1298px;top:302px" width="7" height="6" viewBox="0 0 7 6"><path d="M0.3 0.5h6.2L3.4 5.5z" fill="#222"/></svg>
<div class="t" style="left:1309.70px;top:301.87px;font-size:9.6px;color:#333333;font-weight:bold;transform:scale(0.979,1.000);transform-origin:0 8.13px;">Alternatives</div>
<div class="a" style="left:1298px;top:324px;width:234px;height:67px;background:#ffffff;border:1px solid #e4e4e4;"></div>
<div class="a" style="left:1384px;top:325px;width:1px;height:65px;background:#e4e4e4;"></div>
<svg style="left:1298px;top:324px" width="86" height="67" viewBox="0 0 86 67"><path d="M24 29L37 42L58 44M35 22L69 37M25 27L51 33L68 37M35 23L46 38L58 43" stroke="#7d7d7d" fill="none" stroke-linecap="round" stroke-width="2.4"/><ellipse cx="22.9" cy="26.5" rx="3.6" ry="5.2" transform="rotate(-25 22.9 26.5)" fill="#fafafa" stroke="#767676" stroke-width="1.8"/><ellipse cx="33.6" cy="20.5" rx="4.0" ry="4.8" transform="rotate(-25 33.6 20.5)" fill="#fafafa" stroke="#767676" stroke-width="1.8"/><ellipse cx="69.3" cy="36.6" rx="3.6" ry="3.6" transform="rotate(-25 69.3 36.6)" fill="#fafafa" stroke="#767676" stroke-width="1.8"/><ellipse cx="58.8" cy="44.3" rx="3.8" ry="3.8" transform="rotate(-25 58.8 44.3)" fill="#fafafa" stroke="#767676" stroke-width="1.8"/></svg>
<svg style="left:1394px;top:336px" width="14" height="12" viewBox="0 0 14 12"><path d="M3.5 5V2.5Q3.5 0.8 5.3 0.8H8.2Q10 0.8 10 2.5V5z" fill="#9466d4"/><path d="M1 9V6.5Q1 4.5 3 4.5H10.5Q12.5 4.5 12.5 6.5V9z" fill="#9a6ad8"/><path d="M1 8.7Q1 11.3 6.8 11.3Q12.5 11.3 12.5 8.7z" fill="#ebebf2" stroke="#9c9cac" stroke-width="0.7"/></svg>
<div class="t" style="left:1411.40px;top:336.22px;font-size:9.9px;color:#1c1c1c;font-weight:bold;transform:scale(0.998,1.000);transform-origin:0 8.38px;">Alternative 1</div>
<svg style="left:1507px;top:335px" width="15" height="15" viewBox="0 0 15 15"><circle cx="7.2" cy="7.2" r="6.8" fill="#5fbf2a"/><path d="M3.8 7.4L6.2 9.8L10.6 5" fill="none" stroke="#fff" stroke-width="1.9"/></svg>
<div class="a" style="left:1298px;top:400px;width:234px;height:67px;background:#ffffff;border:1px solid #e4e4e4;"></div>
<div class="a" style="left:1384px;top:401px;width:1px;height:65px;background:#e4e4e4;"></div>
<svg style="left:1298px;top:400px" width="86" height="67" viewBox="0 0 86 67"><path d="M26 27L35 23L57 30L64 36L58 41L47 40L38 36z" fill="#b0aeac"/><path d="M35 23L57 30L49 33L30 27z" fill="#c9c6c3"/><path d="M40 36L38 42" stroke="#7d7d7d" fill="none" stroke-linecap="round" stroke-width="3"/><ellipse cx="22.9" cy="26.5" rx="3.6" ry="5.2" transform="rotate(-25 22.9 26.5)" fill="#fafafa" stroke="#767676" stroke-width="1.8"/><ellipse cx="33.6" cy="20.5" rx="4.0" ry="4.8" transform="rotate(-25 33.6 20.5)" fill="#fafafa" stroke="#767676" stroke-width="1.8"/><ellipse cx="69.3" cy="36.6" rx="3.6" ry="3.6" transform="rotate(-25 69.3 36.6)" fill="#fafafa" stroke="#767676" stroke-width="1.8"/><ellipse cx="58.8" cy="44.3" rx="3.8" ry="3.8" transform="rotate(-25 58.8 44.3)" fill="#fafafa" stroke="#767676" stroke-width="1.8"/><circle cx="38" cy="42.5" r="2.2" fill="#eee" stroke="#888" stroke-width="1.3"/></svg>
<svg style="left:1394px;top:412px" width="14" height="12" viewBox="0 0 14 12"><path d="M3.5 5V2.5Q3.5 0.8 5.3 0.8H8.2Q10 0.8 10 2.5V5z" fill="#9466d4"/><path d="M1 9V6.5Q1 4.5 3 4.5H10.5Q12.5 4.5 12.5 6.5V9z" fill="#9a6ad8"/><path d="M1 8.7Q1 11.3 6.8 11.3Q12.5 11.3 12.5 8.7z" fill="#ebebf2" stroke="#9c9cac" stroke-width="0.7"/></svg>
<div class="t" style="left:1411.40px;top:412.22px;font-size:9.9px;color:#1c1c1c;font-weight:bold;transform:scale(0.998,1.000);transform-origin:0 8.38px;">Alternative 2</div>
<svg style="left:1507px;top:411px" width="15" height="15" viewBox="0 0 15 15"><circle cx="7.2" cy="7.2" r="6.8" fill="#5fbf2a"/><path d="M3.8 7.4L6.2 9.8L10.6 5" fill="none" stroke="#fff" stroke-width="1.9"/></svg>
<div class="a" style="left:1298px;top:476px;width:234px;height:67px;background:#ffffff;border:1px solid #e4e4e4;"></div>
<div class="a" style="left:1384px;top:477px;width:1px;height:65px;background:#e4e4e4;"></div>
<svg style="left:1298px;top:476px" width="86" height="67" viewBox="0 0 86 67"><path d="M25 27L41 32L69 37M34 21L40 31L59 44M40 32L38 42" stroke="#7d7d7d" fill="none" stroke-linecap="round" stroke-width="2.6"/><ellipse cx="22.9" cy="26.5" rx="3.6" ry="5.2" transform="rotate(-25 22.9 26.5)" fill="#fafafa" stroke="#767676" stroke-width="1.8"/><ellipse cx="33.6" cy="20.5" rx="4.0" ry="4.8" transform="rotate(-25 33.6 20.5)" fill="#fafafa" stroke="#767676" stroke-width="1.8"/><ellipse cx="69.3" cy="36.6" rx="3.6" ry="3.6" transform="rotate(-25 69.3 36.6)" fill="#fafafa" stroke="#767676" stroke-width="1.8"/><ellipse cx="58.8" cy="44.3" rx="3.8" ry="3.8" transform="rotate(-25 58.8 44.3)" fill="#fafafa" stroke="#767676" stroke-width="1.8"/><circle cx="38" cy="42.5" r="2.2" fill="#eee" stroke="#888" stroke-width="1.3"/></svg>
<svg style="left:1394px;top:488px" width="14" height="12" viewBox="0 0 14 12"><path d="M3.5 5V2.5Q3.5 0.8 5.3 0.8H8.2Q10 0.8 10 2.5V5z" fill="#9466d4"/><path d="M1 9V6.5Q1 4.5 3 4.5H10.5Q12.5 4.5 12.5 6.5V9z" fill="#9a6ad8"/><path d="M1 8.7Q1 11.3 6.8 11.3Q12.5 11.3 12.5 8.7z" fill="#ebebf2" stroke="#9c9cac" stroke-width="0.7"/></svg>
<div class="t" style="left:1411.40px;top:488.22px;font-size:9.9px;color:#1c1c1c;font-weight:bold;transform:scale(0.998,1.000);transform-origin:0 8.38px;">Alternative 3</div>
<svg style="left:1507px;top:487px" width="15" height="15" viewBox="0 0 15 15"><circle cx="7.2" cy="7.2" r="6.8" fill="#5fbf2a"/><path d="M3.8 7.4L6.2 9.8L10.6 5" fill="none" stroke="#fff" stroke-width="1.9"/></svg>
<div class="a" style="left:1298px;top:552px;width:234px;height:67px;background:#ffffff;border:1px solid #e4e4e4;"></div>
<div class="a" style="left:1384px;top:553px;width:1px;height:65px;background:#e4e4e4;"></div>
<svg style="left:1298px;top:552px" width="86" height="67" viewBox="0 0 86 67"><path d="M24 29L37 42L58 44M35 22L69 37M25 27L51 33L68 37M35 23L46 38L58 43" stroke="#7d7d7d" fill="none" stroke-linecap="round" stroke-width="2.4"/><ellipse cx="22.9" cy="26.5" rx="3.6" ry="5.2" transform="rotate(-25 22.9 26.5)" fill="#fafafa" stroke="#767676" stroke-width="1.8"/><ellipse cx="33.6" cy="20.5" rx="4.0" ry="4.8" transform="rotate(-25 33.6 20.5)" fill="#fafafa" stroke="#767676" stroke-width="1.8"/><ellipse cx="69.3" cy="36.6" rx="3.6" ry="3.6" transform="rotate(-25 69.3 36.6)" fill="#fafafa" stroke="#767676" stroke-width="1.8"/><ellipse cx="58.8" cy="44.3" rx="3.8" ry="3.8" transform="rotate(-25 58.8 44.3)" fill="#fafafa" stroke="#767676" stroke-width="1.8"/></svg>
<svg style="left:1394px;top:564px" width="14" height="12" viewBox="0 0 14 12"><path d="M3.5 5V2.5Q3.5 0.8 5.3 0.8H8.2Q10 0.8 10 2.5V5z" fill="#9466d4"/><path d="M1 9V6.5Q1 4.5 3 4.5H10.5Q12.5 4.5 12.5 6.5V9z" fill="#9a6ad8"/><path d="M1 8.7Q1 11.3 6.8 11.3Q12.5 11.3 12.5 8.7z" fill="#ebebf2" stroke="#9c9cac" stroke-width="0.7"/></svg>
<div class="t" style="left:1411.40px;top:564.22px;font-size:9.9px;color:#1c1c1c;font-weight:bold;transform:scale(0.998,1.000);transform-origin:0 8.38px;">Alternative 4</div>
<svg style="left:1507px;top:563px" width="15" height="15" viewBox="0 0 15 15"><circle cx="7.2" cy="7.2" r="6.8" fill="#5fbf2a"/><path d="M3.8 7.4L6.2 9.8L10.6 5" fill="none" stroke="#fff" stroke-width="1.9"/></svg>
<div class="a" style="left:1297px;top:627px;width:235px;height:69px;background:#ffffff;border:1px solid #a9d2ee;"></div>
<div class="a" style="left:1385px;top:628px;width:146px;height:67px;background:#bedcf0;"></div>
<svg style="left:1298px;top:628px" width="86" height="67" viewBox="0 0 86 67"><path d="M26 27L35 23L57 30L64 36L58 41L47 40L38 36z" fill="#b0aeac"/><path d="M35 23L57 30L49 33L30 27z" fill="#c9c6c3"/><path d="M40 36L38 42" stroke="#7d7d7d" fill="none" stroke-linecap="round" stroke-width="3"/><ellipse cx="22.9" cy="26.5" rx="3.6" ry="5.2" transform="rotate(-25 22.9 26.5)" fill="#fafafa" stroke="#767676" stroke-width="1.8"/><ellipse cx="33.6" cy="20.5" rx="4.0" ry="4.8" transform="rotate(-25 33.6 20.5)" fill="#fafafa" stroke="#767676" stroke-width="1.8"/><ellipse cx="69.3" cy="36.6" rx="3.6" ry="3.6" transform="rotate(-25 69.3 36.6)" fill="#fafafa" stroke="#767676" stroke-width="1.8"/><ellipse cx="58.8" cy="44.3" rx="3.8" ry="3.8" transform="rotate(-25 58.8 44.3)" fill="#fafafa" stroke="#767676" stroke-width="1.8"/><circle cx="38" cy="42.5" r="2.2" fill="#eee" stroke="#888" stroke-width="1.3"/></svg>
<svg style="left:1394px;top:640px" width="14" height="12" viewBox="0 0 14 12"><path d="M3.5 5V2.5Q3.5 0.8 5.3 0.8H8.2Q10 0.8 10 2.5V5z" fill="#9466d4"/><path d="M1 9V6.5Q1 4.5 3 4.5H10.5Q12.5 4.5 12.5 6.5V9z" fill="#9a6ad8"/><path d="M1 8.7Q1 11.3 6.8 11.3Q12.5 11.3 12.5 8.7z" fill="#ebebf2" stroke="#9c9cac" stroke-width="0.7"/></svg>
<div class="t" style="left:1411.40px;top:640.22px;font-size:9.9px;color:#1c1c1c;font-weight:bold;transform:scale(0.998,1.000);transform-origin:0 8.38px;">Alternative 5</div>
<svg style="left:1507px;top:639px" width="15" height="15" viewBox="0 0 15 15"><circle cx="7.2" cy="7.2" r="6.8" fill="#5fbf2a"/><path d="M3.8 7.4L6.2 9.8L10.6 5" fill="none" stroke="#fff" stroke-width="1.9"/></svg>
<div class="a" style="left:1298px;top:704px;width:234px;height:67px;background:#ffffff;border:1px solid #e4e4e4;"></div>
<div class="a" style="left:1384px;top:705px;width:1px;height:65px;background:#e4e4e4;"></div>
<svg style="left:1298px;top:704px" width="86" height="67" viewBox="0 0 86 67"><path d="M25 27L41 32L69 37M34 21L40 31L59 44M40 32L38 42" stroke="#7d7d7d" fill="none" stroke-linecap="round" stroke-width="2.6"/><ellipse cx="22.9" cy="26.5" rx="3.6" ry="5.2" transform="rotate(-25 22.9 26.5)" fill="#fafafa" stroke="#767676" stroke-width="1.8"/><ellipse cx="33.6" cy="20.5" rx="4.0" ry="4.8" transform="rotate(-25 33.6 20.5)" fill="#fafafa" stroke="#767676" stroke-width="1.8"/><ellipse cx="69.3" cy="36.6" rx="3.6" ry="3.6" transform="rotate(-25 69.3 36.6)" fill="#fafafa" stroke="#767676" stroke-width="1.8"/><ellipse cx="58.8" cy="44.3" rx="3.8" ry="3.8" transform="rotate(-25 58.8 44.3)" fill="#fafafa" stroke="#767676" stroke-width="1.8"/><circle cx="38" cy="42.5" r="2.2" fill="#eee" stroke="#888" stroke-width="1.3"/></svg>
<svg style="left:1394px;top:716px" width="14" height="12" viewBox="0 0 14 12"><path d="M3.5 5V2.5Q3.5 0.8 5.3 0.8H8.2Q10 0.8 10 2.5V5z" fill="#9466d4"/><path d="M1 9V6.5Q1 4.5 3 4.5H10.5Q12.5 4.5 12.5 6.5V9z" fill="#9a6ad8"/><path d="M1 8.7Q1 11.3 6.8 11.3Q12.5 11.3 12.5 8.7z" fill="#ebebf2" stroke="#9c9cac" stroke-width="0.7"/></svg>
<div class="t" style="left:1411.40px;top:716.22px;font-size:9.9px;color:#1c1c1c;font-weight:bold;transform:scale(0.998,1.000);transform-origin:0 8.38px;">Alternative 6</div>
<svg style="left:1507px;top:715px" width="15" height="15" viewBox="0 0 15 15"><circle cx="7.2" cy="7.2" r="6.8" fill="#5fbf2a"/><path d="M3.8 7.4L6.2 9.8L10.6 5" fill="none" stroke="#fff" stroke-width="1.9"/></svg>
<div class="a" style="left:1295px;top:776px;width:250px;height:12px;overflow:hidden"><div class="t" style="left:6.40px;top:4.77px;font-size:8.9px;color:#6e6e6e;font-weight:normal;transform:scale(0.996,1.000);transform-origin:0 7.53px;">Your inputs have generated six alternatives.</div>
</div>
<div class="a" style="left:1290px;top:788px;width:267px;height:29px;background:#efefef;border-top:1px solid #dcdcdc;"></div>
<svg style="left:1296px;top:798px" width="11" height="11" viewBox="0 0 11 11"><circle cx="5.5" cy="5.5" r="5" fill="#111"/><rect x="4.7" y="4.6" width="1.7" height="4" fill="#fff"/><circle cx="5.5" cy="3.1" r="0.95" fill="#fff"/></svg>
<div class="a" style="left:1442px;top:796px;width:49px;height:16px;background:#e9e9e9;border:1px solid #d0d0d0;"></div>
<div class="t" style="left:1460.00px;top:799.50px;font-size:9.8px;color:#a8a8a8;font-weight:normal;transform:scale(0.847,1.000);transform-origin:0 8.30px;">OK</div>
<div class="a" style="left:1499px;top:796px;width:49px;height:16px;background:#ececec;border:1px solid #d6d6d6;"></div>
<div class="t" style="left:1507.00px;top:799.50px;font-size:9.8px;color:#9c9c9c;font-weight:normal;transform:scale(1.082,1.000);transform-origin:0 8.30px;">Cancel</div>
<div class="t" style="left:1439.70px;top:825.43px;font-size:9.3px;color:#2a2a2a;font-weight:bold;transform:scale(1.013,1.000);transform-origin:0 7.87px;">Multiple selections</div>
<svg style="left:1538px;top:823px" width="12" height="12" viewBox="0 0 12 12"><circle cx="6" cy="6" r="5.5" fill="#111"/><path d="M3 8.5Q3 3.5 8 3.5L9.5 5.5Q6 5 5.5 8.5z" fill="#fff"/><circle cx="8.8" cy="8.3" r="1.2" fill="#fff"/></svg>
<div class="a" style="left:0px;top:843px;width:1560px;height:34px;background:#efefef;border-top:1px solid #dadada;"></div>
<svg style="left:9px;top:856px" width="94" height="14" viewBox="0 0 94 14">
<rect x="0.5" y="1" width="1.8" height="11" fill="#2a2a2a"/><path d="M2.3 6.5L10.5 1V12z" fill="#2a2a2a"/>
<path d="M21 6.5L27.5 1.5V11.5z" fill="#2a2a2a"/><rect x="28.5" y="3.5" width="2" height="6" fill="#2a2a2a"/>
<path d="M42 1L51 6.5L42 12z" fill="#2a2a2a"/>
<rect x="61" y="3.5" width="2" height="6" fill="#2a2a2a"/><path d="M64 1.5L70.5 6.5L64 11.5z" fill="#2a2a2a"/>
<path d="M82 1L90.2 6.5L82 12z" fill="#2a2a2a"/><rect x="90.2" y="1" width="1.8" height="11" fill="#2a2a2a"/>
</svg>
<div class="a" style="left:121px;top:875px;width:318px;height:2px;background:#b8b8b8;"></div>
<svg style="left:119px;top:855px" width="14" height="15" viewBox="0 0 14 15"><rect x="0.5" y="4.5" width="3.5" height="5.5" rx="0.6" fill="#7d8aa6"/><rect x="5.2" y="4.5" width="3.5" height="5.5" rx="0.6" fill="#7d8aa6"/><rect x="9.9" y="4.5" width="3.5" height="5.5" rx="0.6" fill="#7d8aa6"/></svg>
<div class="a" style="left:125px;top:867px;width:1px;height:6px;background:#c0c0c0;"></div>
<svg style="left:139px;top:855px" width="14" height="15" viewBox="0 0 14 15"><path d="M1 11Q1 3 7 2Q13 3 13 11" fill="none" stroke="#4caf6a" stroke-width="1.3"/><path d="M5 2L9 1V13L5 12z" fill="#f0a070" opacity="0.85"/><path d="M0.5 11.5H13" stroke="#666" stroke-width="0.6"/></svg>
<div class="a" style="left:145px;top:867px;width:1px;height:6px;background:#c0c0c0;"></div>
<svg style="left:158px;top:855px" width="14" height="15" viewBox="0 0 14 15"><path d="M1 1.5H12M1 1.5V11.5H8M12 1.5V8" fill="none" stroke="#777" stroke-width="0.8"/><rect x="0" y="0.5" width="2" height="2" fill="#3a8fd8"/><rect x="11" y="0.5" width="2" height="2" fill="#3a8fd8"/><rect x="0" y="10.5" width="2" height="2" fill="#3a8fd8"/><path d="M8 12L12.5 8" stroke="#f2c230" stroke-width="2"/><circle cx="12.8" cy="7.6" r="1" fill="#e04040"/></svg>
<div class="a" style="left:164px;top:867px;width:1px;height:6px;background:#c0c0c0;"></div>
<svg style="left:178px;top:855px" width="14" height="15" viewBox="0 0 14 15"><path d="M0.5 3L2.5 1H9.5V10.5L7.5 12.5H0.5z" fill="#5ea8e2"/><path d="M7.5 3L9.5 1V10.5L7.5 12.5z" fill="#4a8ccc"/><path d="M0.5 12.5H7.5V14H0.5z" fill="#c7d7e6"/><path d="M12 2V12" stroke="#222" stroke-width="1.1"/><path d="M10.8 3L12 0.5L13.2 3z" fill="#222"/></svg>
<div class="a" style="left:184px;top:867px;width:1px;height:6px;background:#c0c0c0;"></div>
<svg style="left:198px;top:855px" width="14" height="15" viewBox="0 0 14 15"><path d="M1 1.5H12M1 1.5V11.5H8M12 1.5V8" fill="none" stroke="#777" stroke-width="0.8"/><rect x="0" y="0.5" width="2" height="2" fill="#3a8fd8"/><rect x="11" y="0.5" width="2" height="2" fill="#3a8fd8"/><rect x="0" y="10.5" width="2" height="2" fill="#3a8fd8"/><path d="M8 12L12.5 8" stroke="#f2c230" stroke-width="2"/><circle cx="12.8" cy="7.6" r="1" fill="#e04040"/></svg>
<div class="a" style="left:204px;top:867px;width:1px;height:6px;background:#c0c0c0;"></div>
<svg style="left:217px;top:855px" width="14" height="15" viewBox="0 0 14 15"><path d="M0.5 3L2.5 1H9.5V10.5L7.5 12.5H0.5z" fill="#5ea8e2"/><path d="M7.5 3L9.5 1V10.5L7.5 12.5z" fill="#4a8ccc"/><path d="M0.5 12.5H7.5V14H0.5z" fill="#c7d7e6"/><path d="M12 2V12" stroke="#222" stroke-width="1.1"/><path d="M10.8 3L12 0.5L13.2 3z" fill="#222"/></svg>
<div class="a" style="left:223px;top:867px;width:1px;height:6px;background:#c0c0c0;"></div>
<svg style="left:237px;top:855px" width="14" height="15" viewBox="0 0 14 15"><path d="M5.5 1.5L0.8 13H5.5z" fill="#fff" stroke="#555" stroke-width="0.8"/><path d="M6.5 1.5L11.5 13H6.5z" fill="#5aa6df"/></svg>
<div class="a" style="left:243px;top:867px;width:1px;height:6px;background:#c0c0c0;"></div>
<svg style="left:256px;top:855px" width="14" height="15" viewBox="0 0 14 15"><path d="M5.5 1.5L0.8 13H5.5z" fill="#fff" stroke="#555" stroke-width="0.8"/><path d="M6.5 1.5L11.5 13H6.5z" fill="#5aa6df"/></svg>
<div class="a" style="left:262px;top:867px;width:1px;height:6px;background:#c0c0c0;"></div>
<svg style="left:275px;top:855px" width="14" height="15" viewBox="0 0 14 15"><rect x="1.5" y="0.5" width="8" height="8" rx="1.5" fill="#d6e6f5" stroke="#6a8fb8" stroke-width="0.7"/><rect x="5" y="5" width="8.5" height="8.5" rx="1" fill="#f5a45a"/><path d="M0.5 4L5 9M5 4L0.5 9" stroke="#e02020" stroke-width="1.3"/></svg>
<div class="a" style="left:281px;top:867px;width:1px;height:6px;background:#c0c0c0;"></div>
<svg style="left:295px;top:855px" width="14" height="15" viewBox="0 0 14 15"><rect x="1.5" y="0.5" width="8" height="8" rx="1.5" fill="#d6e6f5" stroke="#6a8fb8" stroke-width="0.7"/><rect x="5" y="5" width="8.5" height="8.5" rx="1" fill="#f5a45a"/><path d="M0.5 4L5 9M5 4L0.5 9" stroke="#e02020" stroke-width="1.3"/></svg>
<div class="a" style="left:301px;top:867px;width:1px;height:6px;background:#c0c0c0;"></div>
<svg style="left:314px;top:855px" width="14" height="15" viewBox="0 0 14 15"><rect x="0.5" y="4.5" width="3.5" height="5.5" rx="0.6" fill="#7d8aa6"/><rect x="5.2" y="4.5" width="3.5" height="5.5" rx="0.6" fill="#7d8aa6"/><rect x="9.9" y="4.5" width="3.5" height="5.5" rx="0.6" fill="#7d8aa6"/></svg>
<div class="a" style="left:320px;top:867px;width:1px;height:6px;background:#c0c0c0;"></div>
<svg style="left:333px;top:855px" width="14" height="15" viewBox="0 0 14 15"><rect x="4" y="0.8" width="9" height="9" fill="#7ab8e8"/><rect x="0.8" y="3.5" width="10" height="10" fill="#f4f4f4" stroke="#8a8a8a" stroke-width="1.3"/><rect x="3" y="5.7" width="5.6" height="5.6" fill="#fff" stroke="#9a9a9a" stroke-width="0.7"/></svg>
<div class="a" style="left:339px;top:867px;width:1px;height:6px;background:#c0c0c0;"></div>
<svg style="left:353px;top:855px" width="14" height="15" viewBox="0 0 14 15"><path d="M1 1.5H12M1 1.5V11.5H8M12 1.5V8" fill="none" stroke="#777" stroke-width="0.8"/><rect x="0" y="0.5" width="2" height="2" fill="#3a8fd8"/><rect x="11" y="0.5" width="2" height="2" fill="#3a8fd8"/><rect x="0" y="10.5" width="2" height="2" fill="#3a8fd8"/><path d="M8 12L12.5 8" stroke="#f2c230" stroke-width="2"/><circle cx="12.8" cy="7.6" r="1" fill="#e04040"/></svg>
<div class="a" style="left:359px;top:867px;width:1px;height:6px;background:#c0c0c0;"></div>
<svg style="left:373px;top:855px" width="14" height="15" viewBox="0 0 14 15"><path d="M0.5 3L2.5 1H9.5V10.5L7.5 12.5H0.5z" fill="#5ea8e2"/><path d="M7.5 3L9.5 1V10.5L7.5 12.5z" fill="#4a8ccc"/><path d="M0.5 12.5H7.5V14H0.5z" fill="#c7d7e6"/><path d="M12 2V12" stroke="#222" stroke-width="1.1"/><path d="M10.8 3L12 0.5L13.2 3z" fill="#222"/></svg>
<div class="a" style="left:379px;top:867px;width:1px;height:6px;background:#c0c0c0;"></div>
<svg style="left:392px;top:855px" width="14" height="15" viewBox="0 0 14 15"><circle cx="9" cy="7" r="3.8" fill="#8fb8e0" stroke="#5b86b8" stroke-width="0.8"/><path d="M1 7H6" stroke="#111" stroke-width="1.3"/><path d="M0.3 7L3.5 4.3V9.7z" fill="#111"/></svg>
<div class="a" style="left:398px;top:867px;width:1px;height:6px;background:#c0c0c0;"></div>
<svg style="left:412px;top:855px" width="14" height="15" viewBox="0 0 14 15"><path d="M5.5 1.5L0.8 13H5.5z" fill="#fff" stroke="#555" stroke-width="0.8"/><path d="M6.5 1.5L11.5 13H6.5z" fill="#5aa6df"/></svg>
<div class="a" style="left:418px;top:867px;width:1px;height:6px;background:#c0c0c0;"></div>
<svg style="left:431px;top:855px" width="14" height="15" viewBox="0 0 14 15"><rect x="0.8" y="2" width="5" height="11.5" fill="#fff" stroke="#999" stroke-width="0.9"/><rect x="6" y="1" width="7" height="5" fill="#4d9be0"/></svg>
<div class="a" style="left:437px;top:867px;width:1px;height:6px;background:#c0c0c0;"></div>
<svg style="left:178px;top:848px" width="13" height="5" viewBox="0 0 13 5"><path d="M1 4.5L3.5 0.5M5 4.5L7.5 0.5M9 4.5L11.5 0.5" stroke="#333" stroke-width="1.6"/></svg>
<svg style="left:218px;top:848px" width="13" height="5" viewBox="0 0 13 5"><path d="M1 4.5L3.5 0.5M5 4.5L7.5 0.5M9 4.5L11.5 0.5" stroke="#333" stroke-width="1.6"/></svg>
<svg style="left:257px;top:848px" width="13" height="5" viewBox="0 0 13 5"><path d="M1 4.5L3.5 0.5M5 4.5L7.5 0.5M9 4.5L11.5 0.5" stroke="#333" stroke-width="1.6"/></svg>
<svg style="left:121px;top:871px" width="9" height="7" viewBox="0 0 9 7"><rect x="0.5" y="0.5" width="8" height="8" rx="2" fill="#e8e8e8" stroke="#777" stroke-width="0.8"/><path d="M4.5 2V7M2 4.5H7" stroke="#333" stroke-width="1"/></svg>
<svg style="left:316px;top:871px" width="9" height="7" viewBox="0 0 9 7"><rect x="0.5" y="0.5" width="8" height="8" rx="2" fill="#e8e8e8" stroke="#777" stroke-width="0.8"/><path d="M4.5 2V7M2 4.5H7" stroke="#333" stroke-width="1"/></svg>
<svg style="left:442px;top:851px" width="11" height="26" viewBox="0 0 11 26"><path d="M0.5 0.5H10L8 4.5H2.5z" fill="#5a5a5a"/><rect x="4.6" y="3" width="1.8" height="23" fill="#5a5a5a"/></svg>
<svg style="left:1536px;top:856px" width="14" height="14" viewBox="0 0 14 14"><g transform="translate(7,7)"><rect x="-1.5" y="-6.8" width="3" height="3.2" fill="#9a9a9a" transform="rotate(0)"/><rect x="-1.5" y="-6.8" width="3" height="3.2" fill="#9a9a9a" transform="rotate(45)"/><rect x="-1.5" y="-6.8" width="3" height="3.2" fill="#9a9a9a" transform="rotate(90)"/><rect x="-1.5" y="-6.8" width="3" height="3.2" fill="#9a9a9a" transform="rotate(135)"/><rect x="-1.5" y="-6.8" width="3" height="3.2" fill="#9a9a9a" transform="rotate(180)"/><rect x="-1.5" y="-6.8" width="3" height="3.2" fill="#9a9a9a" transform="rotate(225)"/><rect x="-1.5" y="-6.8" width="3" height="3.2" fill="#9a9a9a" transform="rotate(270)"/><rect x="-1.5" y="-6.8" width="3" height="3.2" fill="#9a9a9a" transform="rotate(315)"/><circle r="4.8" fill="#9a9a9a"/><circle r="2.1" fill="#efefef"/></g></svg>
<div class="a" style="left:684px;top:821px;width:193px;height:19px;background:#f2f2f2;"></div>
<svg style="left:684px;top:821px" width="193" height="19" viewBox="0 0 193 19">
<g transform="translate(2,2)">
<ellipse cx="7" cy="7" rx="6.5" ry="3" fill="none" stroke="#777" stroke-width="0.9"/>
<ellipse cx="7" cy="7" rx="3" ry="6.5" fill="none" stroke="#777" stroke-width="0.9"/>
<circle cx="7" cy="7" r="1.5" fill="#3a8fd8"/>
<path d="M20 6h5l-2.5 3z" fill="#222"/>
</g>
<g transform="translate(29,2)">
<rect x="0.5" y="4" width="12.5" height="9" fill="#e8e8e8" stroke="#555" stroke-width="0.9"/>
<rect x="3" y="7" width="7.5" height="3.5" fill="#aaa" stroke="#555" stroke-width="0.6"/>
<path d="M3 3.5L5 1.5M8 3.5L10 1.5" stroke="#555" stroke-width="0.9"/>
</g>
<g transform="translate(50,1.5)">
<path d="M4 13Q1 9 1.5 7Q2.5 6 4 8V3Q4 1.8 5 1.8Q6 1.8 6 3V1.5Q6 0.5 7 0.5Q8 0.5 8 1.5V2Q8 1 9 1Q10 1 10 2V3Q10 2.2 11 2.2Q12 2.2 12 3.5V9Q12 12 10 13.5z" fill="#fff" stroke="#333" stroke-width="0.9"/>
</g>
<g transform="translate(71,2)">
<circle cx="5.5" cy="6.5" r="4.3" fill="#fff" stroke="#333" stroke-width="1.3"/>
<path d="M8.5 9.5L12.5 13.5" stroke="#333" stroke-width="2"/>
<path d="M11 0.5V5M8.8 2.7H13.2" stroke="#333" stroke-width="0.8"/>
</g>
<g transform="translate(92,1.5)">
<rect x="0.5" y="0.5" width="13" height="13" fill="none" stroke="#555" stroke-width="0.7" stroke-dasharray="1.2 1.2"/>
<circle cx="6" cy="6" r="4.6" fill="#fff" stroke="#333" stroke-width="1.3"/>
<path d="M9.2 9.2L13 13" stroke="#333" stroke-width="2.2"/>
<path d="M18 6h5l-2.5 3z" fill="#222"/>
</g>
<g transform="translate(119,2)">
<rect x="0.5" y="0.5" width="13" height="10" fill="#8fbfe8" stroke="#555" stroke-width="0.9"/>
<rect x="4" y="11" width="6" height="2.5" fill="#888"/>
<path d="M17 6h5l-2.5 3z" fill="#222"/>
</g>
<g transform="translate(144,1.5)">
<rect x="0.5" y="0.5" width="13" height="13" fill="#d8d8d8" stroke="#666" stroke-width="0.8"/>
<path d="M3.5 0.5V13.5M6.5 0.5V13.5M9.5 0.5V13.5M0.5 3.5H13.5M0.5 6.5H13.5M0.5 9.5H13.5" stroke="#777" stroke-width="0.6"/>
<path d="M17 6.5h5l-2.5 3z" fill="#222"/>
</g>
<g transform="translate(169,2.5)">
<rect x="0.5" y="0.5" width="12" height="12" fill="#6d9fd8" stroke="#4e7fb8" stroke-width="0.8"/>
<path d="M6.5 0.5V12.5M0.5 6.5H12.5" stroke="#e8f0f8" stroke-width="1"/>
<path d="M16 5.5h5l-2.5 3z" fill="#222"/>
</g>
</svg>
<svg style="left:1478px;top:136px" width="80" height="70" viewBox="0 0 80 70">
<path d="M6.6 15.9L18.4 16.8L19.3 64.2L8 57.8z" fill="#e2e2e2" stroke="#cdcdcd" stroke-width="0.6"/>
<path d="M18.4 16.8L57.2 17.7V56.9L19.3 64.2z" fill="#dadada" stroke="#cdcdcd" stroke-width="0.6"/>
<path d="M6.6 15.9L20 12.2L57.2 13.5V17.7L18.4 16.8z" fill="#e9e9e9"/>
<path d="M7 16.2L18.4 17M20 17L57 17.5M10 14.5L20 12.6M26 12.8L56 14" fill="none" stroke="#6a6a6a" stroke-width="0.8" stroke-dasharray="3 2"/>
<g transform="translate(38.2 40.2) rotate(183) scale(0.78 1.18)"><text x="-23.5" y="3.6" font-family="Liberation Sans" font-size="10" font-weight="bold" fill="#6e6e6e">BOTTOM</text></g>
<g transform="translate(13 39) rotate(95) scale(1 0.8)"><text x="-9" y="3" font-family="Liberation Sans" font-size="7" font-weight="bold" fill="#8a8a8a">LEFT</text></g>
<path d="M16.2 15L19.3 64.2" stroke="#6a62d8" stroke-width="1.4"/>
<path d="M19.8 64.2L64 56" stroke="#ea8080" stroke-width="1.2"/>
<path d="M19.5 64L8 49" stroke="#8ee08e" stroke-width="1.1"/>
<text x="12" y="11.8" font-family="Liberation Sans" font-size="10.5" fill="#8d86ea">Z</text>
<text x="65.2" y="58.8" font-family="Liberation Sans" font-size="10.5" fill="#ee8e8e">X</text>
<text x="4.5" y="52.3" font-family="Liberation Sans" font-size="9.5" fill="#92e092">Y</text>
</svg>
<svg style="left:1466px;top:673px" width="12" height="18" viewBox="0 0 12 18"><path d="M1 1V14.5L4.3 11.5L6.8 16.8L8.8 15.9L6.4 10.7H10.8z" fill="#fff" stroke="#333" stroke-width="0.9" stroke-linejoin="round"/></svg>
</body></html>
